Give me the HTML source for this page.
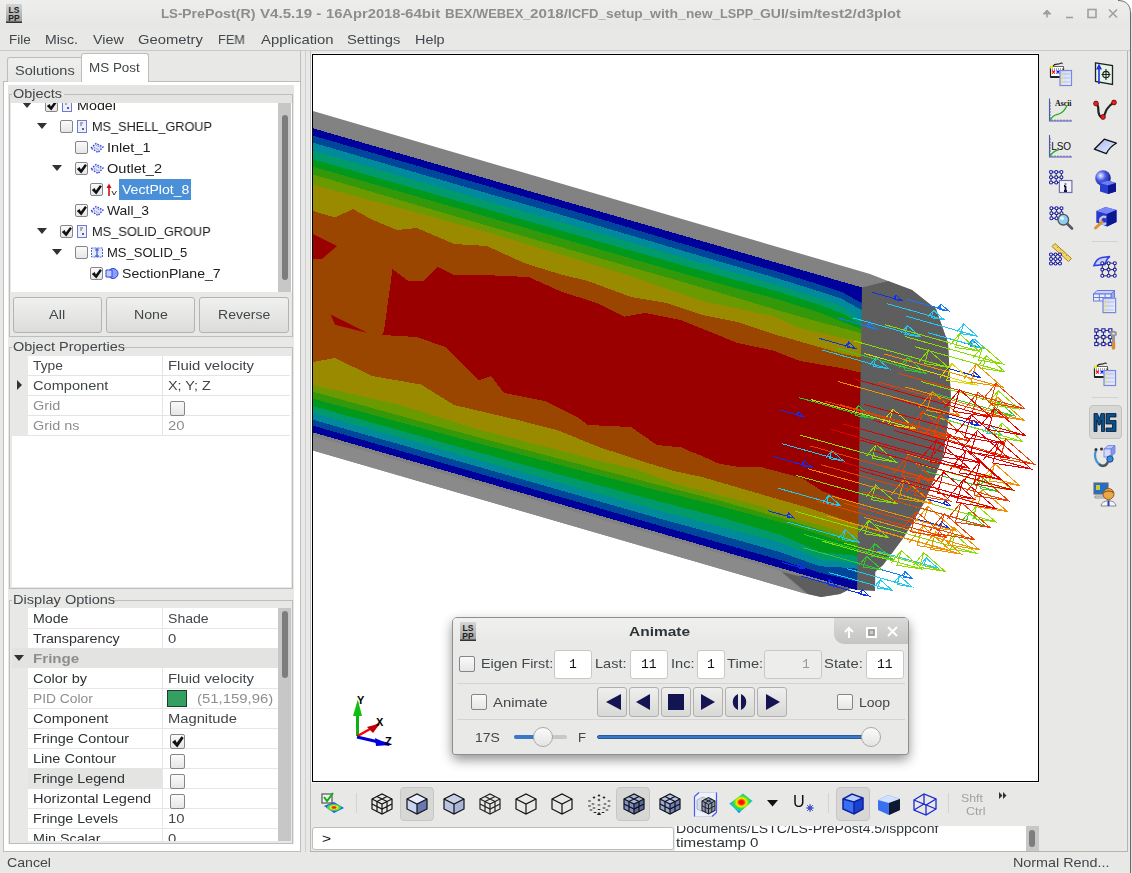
<!DOCTYPE html>
<html><head><meta charset="utf-8"><title>LS-PrePost</title>
<style>
html,body{margin:0;padding:0;width:1132px;height:873px;overflow:hidden;background:#e8e8e7;font-family:"Liberation Sans",sans-serif}
.r{position:absolute;box-sizing:border-box}
svg.r{overflow:visible}
.t{position:absolute;white-space:nowrap;transform-origin:0 0;will-change:transform}
</style></head><body>
<div class="r" style="left:0px;top:0px;width:1132px;height:27px;background:linear-gradient(#eeeeed,#e6e6e5)"></div>
<svg class="r" style="left:6px;top:4px" width="16" height="19" viewBox="0 0 16 19"><defs><linearGradient id="lg1" x1="0" y1="0" x2="0" y2="1"><stop offset="0" stop-color="#d6d6d6"/><stop offset="1" stop-color="#9c9c9c"/></linearGradient></defs><rect x="0" y="0" width="16" height="19" fill="url(#lg1)"/><rect x="0" y="17.5" width="16" height="1.5" fill="#333"/><text x="8" y="8.5" font-family="Liberation Sans" font-size="8.5" font-weight="bold" text-anchor="middle" fill="#222">LS</text><text x="8" y="16.5" font-family="Liberation Sans" font-size="8.5" font-weight="bold" text-anchor="middle" fill="#222">PP</text></svg>
<div class="t" style="left:161.0px;top:8px;font-size:12px;line-height:12px;color:#8d8d8d;font-weight:bold;font-family:'Liberation Sans';transform:scaleX(1.1077)">LS-</div>
<div class="t" style="left:182.41028911564626px;top:8px;font-size:12px;line-height:12px;color:#8d8d8d;font-weight:bold;font-family:'Liberation Sans';transform:scaleX(1.1849)">PrePost(R)</div>
<div class="t" style="left:260.09141156462584px;top:8px;font-size:12px;line-height:12px;color:#8d8d8d;font-weight:bold;font-family:'Liberation Sans';transform:scaleX(1.2605)">V4.5.19 -</div>
<div class="t" style="left:325.6437074829932px;top:8px;font-size:12px;line-height:12px;color:#8d8d8d;font-weight:bold;font-family:'Liberation Sans';transform:scaleX(1.2268)">16Apr2018-</div>
<div class="t" style="left:405.0238095238095px;top:8px;font-size:12px;line-height:12px;color:#8d8d8d;font-weight:bold;font-family:'Liberation Sans';transform:scaleX(1.2630)">64bit</div>
<div class="t" style="left:444.5880102040816px;top:8px;font-size:12px;line-height:12px;color:#8d8d8d;font-weight:bold;font-family:'Liberation Sans';transform:scaleX(1.1141)">BEX/</div>
<div class="t" style="left:475.78316326530614px;top:8px;font-size:12px;line-height:12px;color:#8d8d8d;font-weight:bold;font-family:'Liberation Sans';transform:scaleX(1.0736)">WEBEX_</div>
<div class="t" style="left:530.1819727891157px;top:8px;font-size:12px;line-height:12px;color:#8d8d8d;font-weight:bold;font-family:'Liberation Sans';transform:scaleX(1.2668)">2018/</div>
<div class="t" style="left:568.2045068027211px;top:8px;font-size:12px;line-height:12px;color:#8d8d8d;font-weight:bold;font-family:'Liberation Sans';transform:scaleX(1.0876)">ICFD_</div>
<div class="t" style="left:605.9124149659864px;top:8px;font-size:12px;line-height:12px;color:#8d8d8d;font-weight:bold;font-family:'Liberation Sans';transform:scaleX(1.1496)">setup_</div>
<div class="t" style="left:650.3690476190477px;top:8px;font-size:12px;line-height:12px;color:#8d8d8d;font-weight:bold;font-family:'Liberation Sans';transform:scaleX(1.1654)">with_</div>
<div class="t" style="left:686.0948129251701px;top:8px;font-size:12px;line-height:12px;color:#8d8d8d;font-weight:bold;font-family:'Liberation Sans';transform:scaleX(1.1337)">new_</div>
<div class="t" style="left:720.1058673469388px;top:8px;font-size:12px;line-height:12px;color:#8d8d8d;font-weight:bold;font-family:'Liberation Sans';transform:scaleX(1.0565)">LSPP_</div>
<div class="t" style="left:760.2521258503401px;top:8px;font-size:12px;line-height:12px;color:#8d8d8d;font-weight:bold;font-family:'Liberation Sans';transform:scaleX(1.1618)">GUI/</div>
<div class="t" style="left:788.8988095238095px;top:8px;font-size:12px;line-height:12px;color:#8d8d8d;font-weight:bold;font-family:'Liberation Sans';transform:scaleX(1.1805)">sim/</div>
<div class="t" style="left:817.2308673469388px;top:8px;font-size:12px;line-height:12px;color:#8d8d8d;font-weight:bold;font-family:'Liberation Sans';transform:scaleX(1.2683)">test2/</div>
<div class="t" style="left:856.9838435374149px;top:8px;font-size:12px;line-height:12px;color:#8d8d8d;font-weight:bold;font-family:'Liberation Sans';transform:scaleX(1.2206)">d3plot</div>
<svg class="r" style="left:1038px;top:5px" width="90" height="18" viewBox="0 0 90 18"><g stroke="#a0a0a0" stroke-width="1.6" fill="none"><path d="M9 12.5V7"/><path d="M5 9L9 5L13 9Z" fill="#a0a0a0" stroke-width="1"/><path d="M28 12.5h7"/><rect x="50" y="4.5" width="8" height="8"/><path d="M71 4.5l8 8M79 4.5l-8 8"/></g></svg>
<div class="r" style="left:0px;top:27px;width:1132px;height:23px;background:#e8e8e7"></div>
<div class="r" style="left:0px;top:50px;width:1132px;height:1px;background:#cacac9"></div>
<div class="t" style="left:9px;top:33px;font-size:13px;line-height:13px;color:#42474a;font-family:'Liberation Sans';transform:scaleX(1.0380)">File</div>
<div class="t" style="left:45px;top:33px;font-size:13px;line-height:13px;color:#42474a;font-family:'Liberation Sans';transform:scaleX(1.0835)">Misc.</div>
<div class="t" style="left:93px;top:33px;font-size:13px;line-height:13px;color:#42474a;font-family:'Liberation Sans';transform:scaleX(1.1034)">View</div>
<div class="t" style="left:138px;top:33px;font-size:13px;line-height:13px;color:#42474a;font-family:'Liberation Sans';transform:scaleX(1.1355)">Geometry</div>
<div class="t" style="left:218px;top:33px;font-size:13px;line-height:13px;color:#42474a;font-family:'Liberation Sans';transform:scaleX(0.9812)">FEM</div>
<div class="t" style="left:261px;top:33px;font-size:13px;line-height:13px;color:#42474a;font-family:'Liberation Sans';transform:scaleX(1.1412)">Application</div>
<div class="t" style="left:347px;top:33px;font-size:13px;line-height:13px;color:#42474a;font-family:'Liberation Sans';transform:scaleX(1.1344)">Settings</div>
<div class="t" style="left:415px;top:33px;font-size:13px;line-height:13px;color:#42474a;font-family:'Liberation Sans';transform:scaleX(1.1081)">Help</div>
<div class="r" style="left:0px;top:51px;width:1132px;height:822px;background:#e8e8e7"></div>
<div class="r" style="left:3px;top:81px;width:298px;height:771px;border:1px solid #bdbdbc;background:#ffffff;box-sizing:border-box"></div>
<div class="r" style="left:8px;top:85px;width:286px;height:759px;background:#e8e8e7"></div>
<div class="r" style="left:7px;top:57px;width:76px;height:25px;border:1px solid #bdbdbc;border-bottom:none;border-radius:3px 3px 0 0;background:linear-gradient(#efefee,#e6e6e5);box-sizing:border-box"></div>
<div class="r" style="left:81px;top:53px;width:68px;height:29px;border:1px solid #bdbdbc;border-bottom:none;border-radius:3px 3px 0 0;background:#ffffff;box-sizing:border-box"></div>
<div class="r" style="left:82px;top:81px;width:66px;height:1px;background:#ffffff"></div>
<div class="t" style="left:15px;top:64px;font-size:13px;line-height:13px;color:#42474a;font-family:'Liberation Sans';transform:scaleX(1.1159)">Solutions</div>
<div class="t" style="left:89px;top:61px;font-size:13px;line-height:13px;color:#42474a;font-family:'Liberation Sans';transform:scaleX(1.0337)">MS Post</div>
<div class="r" style="left:8px;top:85px;width:286px;height:18px;background:#e4e4e3"></div>
<div class="r" style="left:9px;top:94px;width:284px;height:243px;border:1px solid #bdbdbc;box-sizing:border-box"></div>
<div class="r" style="left:12px;top:89px;width:52px;height:8px;background:#e4e4e3"></div>
<div class="r" style="left:12px;top:94px;width:52px;height:2px;background:#e8e8e7"></div>
<div class="t" style="left:13px;top:87px;font-size:13px;line-height:13px;color:#42474a;font-family:'Liberation Sans';transform:scaleX(1.1138)">Objects</div>
<div class="r" style="left:11px;top:103px;width:281px;height:189px;background:#ffffff"></div>
<div class="r" style="left:278px;top:103px;width:13px;height:189px;background:#c6c7c6"></div>
<div class="r" style="left:282px;top:115px;width:6px;height:165px;background:#7c7d7c;border-radius:3px"></div>
<div class="r" style="left:11px;top:103px;width:267px;height:189px;overflow:hidden">
<svg class="r" style="left:11px;top:-1px" width="10" height="6" viewBox="0 0 10 6"><path d="M0 0H10L5.0 6Z" fill="#2e3436"/></svg>
<div class="r" style="left:34px;top:-4px;width:13px;height:13px;border:1px solid #85858a;border-radius:2px;background:linear-gradient(#fafafa,#e6e6e6);box-sizing:border-box"></div>
<svg class="r" style="left:34px;top:-4px" width="13" height="13" viewBox="0 0 13 13"><polygon points="1.80,6.90 4.60,5.00 5.90,7.50 10.00,2.00 11.90,3.50 6.30,11.60" fill="#111"/></svg>
<svg class="r" style="left:51px;top:-4px" width="10" height="13" viewBox="0 0 10 13"><rect x="0.5" y="0.5" width="9" height="12" fill="#eef" stroke="#6b7bd6"/><path d="M3 3h3M3 5h2M5 8l2 2M7 8l-2 2" stroke="#555" stroke-width="0.9"/></svg>
<div class="t" style="left:66px;top:-4px;font-size:13px;line-height:13px;color:#202020;font-family:'Liberation Sans';transform:scaleX(1.1019)">Model</div>
<svg class="r" style="left:26px;top:20px" width="10" height="6" viewBox="0 0 10 6"><path d="M0 0H10L5.0 6Z" fill="#2e3436"/></svg>
<div class="r" style="left:49px;top:17px;width:13px;height:13px;border:1px solid #85858a;border-radius:2px;background:linear-gradient(#fafafa,#e6e6e6);box-sizing:border-box"></div>
<svg class="r" style="left:66px;top:17px" width="10" height="13" viewBox="0 0 10 13"><rect x="0.5" y="0.5" width="9" height="12" fill="#eef" stroke="#6b7bd6"/><path d="M3 3h3M3 5h2M5 8l2 2M7 8l-2 2" stroke="#555" stroke-width="0.9"/></svg>
<div class="t" style="left:81px;top:17px;font-size:13px;line-height:13px;color:#202020;font-family:'Liberation Sans';transform:scaleX(0.9762)">MS_SHELL_GROUP</div>
<div class="r" style="left:64px;top:38px;width:13px;height:13px;border:1px solid #85858a;border-radius:2px;background:linear-gradient(#fafafa,#e6e6e6);box-sizing:border-box"></div>
<svg class="r" style="left:79px;top:39px" width="14" height="12" viewBox="0 0 14 12"><path d="M1 6L6 1.5L13 5L8 10.5Z" fill="#e4e6f0" stroke="#3a4ae8" stroke-width="1.4" stroke-dasharray="1.6 1.2"/><path d="M4 5.5l5 2.5M6.5 3.5l4 2" stroke="#6070e0" stroke-width="1" stroke-dasharray="1 1"/></svg>
<div class="t" style="left:96px;top:38px;font-size:13px;line-height:13px;color:#202020;font-family:'Liberation Sans';transform:scaleX(1.1148)">Inlet_1</div>
<svg class="r" style="left:41px;top:62px" width="10" height="6" viewBox="0 0 10 6"><path d="M0 0H10L5.0 6Z" fill="#2e3436"/></svg>
<div class="r" style="left:64px;top:59px;width:13px;height:13px;border:1px solid #85858a;border-radius:2px;background:linear-gradient(#fafafa,#e6e6e6);box-sizing:border-box"></div>
<svg class="r" style="left:64px;top:59px" width="13" height="13" viewBox="0 0 13 13"><polygon points="1.80,6.90 4.60,5.00 5.90,7.50 10.00,2.00 11.90,3.50 6.30,11.60" fill="#111"/></svg>
<svg class="r" style="left:79px;top:60px" width="14" height="12" viewBox="0 0 14 12"><path d="M1 6L6 1.5L13 5L8 10.5Z" fill="#e4e6f0" stroke="#3a4ae8" stroke-width="1.4" stroke-dasharray="1.6 1.2"/><path d="M4 5.5l5 2.5M6.5 3.5l4 2" stroke="#6070e0" stroke-width="1" stroke-dasharray="1 1"/></svg>
<div class="t" style="left:96px;top:59px;font-size:13px;line-height:13px;color:#202020;font-family:'Liberation Sans';transform:scaleX(1.1195)">Outlet_2</div>
<div class="r" style="left:79px;top:80px;width:13px;height:13px;border:1px solid #85858a;border-radius:2px;background:linear-gradient(#fafafa,#e6e6e6);box-sizing:border-box"></div>
<svg class="r" style="left:79px;top:80px" width="13" height="13" viewBox="0 0 13 13"><polygon points="1.80,6.90 4.60,5.00 5.90,7.50 10.00,2.00 11.90,3.50 6.30,11.60" fill="#111"/></svg>
<svg class="r" style="left:95px;top:80px" width="12" height="14" viewBox="0 0 12 14"><path d="M3 13V3" stroke="#d01010" stroke-width="1.6"/><path d="M0.5 5L3 0.5L5.5 5Z" fill="#d01010"/><path d="M6 8l2 4l2.5-4" stroke="#333" stroke-width="1" fill="none"/></svg>
<div class="r" style="left:108px;top:76px;width:72px;height:21px;background:#4a90d9"></div>
<div class="t" style="left:111px;top:80px;font-size:13px;line-height:13px;color:#ffffff;font-family:'Liberation Sans';transform:scaleX(1.0837)">VectPlot_8</div>
<div class="r" style="left:64px;top:101px;width:13px;height:13px;border:1px solid #85858a;border-radius:2px;background:linear-gradient(#fafafa,#e6e6e6);box-sizing:border-box"></div>
<svg class="r" style="left:64px;top:101px" width="13" height="13" viewBox="0 0 13 13"><polygon points="1.80,6.90 4.60,5.00 5.90,7.50 10.00,2.00 11.90,3.50 6.30,11.60" fill="#111"/></svg>
<svg class="r" style="left:79px;top:102px" width="14" height="12" viewBox="0 0 14 12"><path d="M1 6L6 1.5L13 5L8 10.5Z" fill="#e4e6f0" stroke="#3a4ae8" stroke-width="1.4" stroke-dasharray="1.6 1.2"/><path d="M4 5.5l5 2.5M6.5 3.5l4 2" stroke="#6070e0" stroke-width="1" stroke-dasharray="1 1"/></svg>
<div class="t" style="left:96px;top:101px;font-size:13px;line-height:13px;color:#202020;font-family:'Liberation Sans';transform:scaleX(1.0692)">Wall_3</div>
<svg class="r" style="left:26px;top:125px" width="10" height="6" viewBox="0 0 10 6"><path d="M0 0H10L5.0 6Z" fill="#2e3436"/></svg>
<div class="r" style="left:49px;top:122px;width:13px;height:13px;border:1px solid #85858a;border-radius:2px;background:linear-gradient(#fafafa,#e6e6e6);box-sizing:border-box"></div>
<svg class="r" style="left:49px;top:122px" width="13" height="13" viewBox="0 0 13 13"><polygon points="1.80,6.90 4.60,5.00 5.90,7.50 10.00,2.00 11.90,3.50 6.30,11.60" fill="#111"/></svg>
<svg class="r" style="left:66px;top:122px" width="10" height="13" viewBox="0 0 10 13"><rect x="0.5" y="0.5" width="9" height="12" fill="#eef" stroke="#6b7bd6"/><path d="M3 3h3M3 5h2M5 8l2 2M7 8l-2 2" stroke="#555" stroke-width="0.9"/></svg>
<div class="t" style="left:81px;top:122px;font-size:13px;line-height:13px;color:#202020;font-family:'Liberation Sans';transform:scaleX(0.9842)">MS_SOLID_GROUP</div>
<svg class="r" style="left:41px;top:146px" width="10" height="6" viewBox="0 0 10 6"><path d="M0 0H10L5.0 6Z" fill="#2e3436"/></svg>
<div class="r" style="left:64px;top:143px;width:13px;height:13px;border:1px solid #85858a;border-radius:2px;background:linear-gradient(#fafafa,#e6e6e6);box-sizing:border-box"></div>
<svg class="r" style="left:79px;top:143px" width="14" height="13" viewBox="0 0 14 13"><rect x="1.5" y="2" width="11" height="9" fill="#e4ebff" stroke="#4b63d8" stroke-dasharray="2 1"/><path d="M7 2V11M5 4H9M5 10H9" stroke="#3a50c8" stroke-width="1.2"/></svg>
<div class="t" style="left:96px;top:143px;font-size:13px;line-height:13px;color:#202020;font-family:'Liberation Sans';transform:scaleX(1.0012)">MS_SOLID_5</div>
<div class="r" style="left:79px;top:164px;width:13px;height:13px;border:1px solid #85858a;border-radius:2px;background:linear-gradient(#fafafa,#e6e6e6);box-sizing:border-box"></div>
<svg class="r" style="left:79px;top:164px" width="13" height="13" viewBox="0 0 13 13"><polygon points="1.80,6.90 4.60,5.00 5.90,7.50 10.00,2.00 11.90,3.50 6.30,11.60" fill="#111"/></svg>
<svg class="r" style="left:94px;top:164px" width="14" height="13" viewBox="0 0 14 13"><ellipse cx="8" cy="6.5" rx="5" ry="5" fill="#8aa0ff" stroke="#2840d0"/><path d="M1 3h6v7H1z" fill="#c0ccff" stroke="#3048d8"/></svg>
<div class="t" style="left:111px;top:164px;font-size:13px;line-height:13px;color:#202020;font-family:'Liberation Sans';transform:scaleX(1.0833)">SectionPlane_7</div>
</div>
<div class="r" style="left:13px;top:297px;width:89px;height:36px;border:1px solid #b4b4b3;border-radius:3px;background:linear-gradient(#f0f0ef,#dcdcdb);box-sizing:border-box"></div>
<div class="t" style="left:49.4453125px;top:308px;font-size:13px;line-height:13px;color:#42474a;font-family:'Liberation Sans';transform:scaleX(1.1146)">All</div>
<div class="r" style="left:106px;top:297px;width:89px;height:36px;border:1px solid #b4b4b3;border-radius:3px;background:linear-gradient(#f0f0ef,#dcdcdb);box-sizing:border-box"></div>
<div class="t" style="left:133.546875px;top:308px;font-size:13px;line-height:13px;color:#42474a;font-family:'Liberation Sans';transform:scaleX(1.0905)">None</div>
<div class="r" style="left:199px;top:297px;width:90px;height:36px;border:1px solid #b4b4b3;border-radius:3px;background:linear-gradient(#f0f0ef,#dcdcdb);box-sizing:border-box"></div>
<div class="t" style="left:217.875px;top:308px;font-size:13px;line-height:13px;color:#42474a;font-family:'Liberation Sans';transform:scaleX(1.0791)">Reverse</div>
<div class="r" style="left:9px;top:347px;width:284px;height:242px;border:1px solid #bdbdbc;box-sizing:border-box"></div>
<div class="r" style="left:12px;top:342px;width:110px;height:8px;background:#e8e8e7"></div>
<div class="t" style="left:13px;top:340px;font-size:13px;line-height:13px;color:#42474a;font-family:'Liberation Sans';transform:scaleX(1.1163)">Object Properties</div>
<div class="r" style="left:12px;top:356px;width:279px;height:231px;background:#ffffff"></div>
<div class="r" style="left:12px;top:356px;width:16px;height:80px;background:#e8e8e7"></div>
<div class="r" style="left:28px;top:375px;width:262px;height:1px;background:#e4e4e4"></div>
<div class="r" style="left:28px;top:395px;width:262px;height:1px;background:#e4e4e4"></div>
<div class="r" style="left:28px;top:415px;width:262px;height:1px;background:#e4e4e4"></div>
<div class="r" style="left:28px;top:435px;width:262px;height:1px;background:#e4e4e4"></div>
<div class="r" style="left:162px;top:356px;width:1px;height:80px;background:#e4e4e4"></div>
<svg class="r" style="left:17px;top:380px" width="5" height="10" viewBox="0 0 5 10"><path d="M0 0V10L5 5.0Z" fill="#2e3436"/></svg>
<div class="t" style="left:33px;top:359px;font-size:13px;line-height:13px;color:#42474a;font-family:'Liberation Sans';transform:scaleX(1.0588)">Type</div>
<div class="t" style="left:168px;top:359px;font-size:13px;line-height:13px;color:#42474a;font-family:'Liberation Sans';transform:scaleX(1.1455)">Fluid velocity</div>
<div class="t" style="left:33px;top:379px;font-size:13px;line-height:13px;color:#42474a;font-family:'Liberation Sans';transform:scaleX(1.1222)">Component</div>
<div class="t" style="left:168px;top:379px;font-size:13px;line-height:13px;color:#42474a;font-family:'Liberation Sans';transform:scaleX(1.1063)">X; Y; Z</div>
<div class="t" style="left:33px;top:399px;font-size:13px;line-height:13px;color:#8e8e8d;font-family:'Liberation Sans';transform:scaleX(1.1107)">Grid</div>
<div class="r" style="left:170px;top:401px;width:15px;height:15px;border:1px solid #85858a;border-radius:2px;background:linear-gradient(#fafafa,#e6e6e6);box-sizing:border-box"></div>
<div class="t" style="left:33px;top:419px;font-size:13px;line-height:13px;color:#8e8e8d;font-family:'Liberation Sans';transform:scaleX(1.1074)">Grid ns</div>
<div class="t" style="left:168px;top:419px;font-size:13px;line-height:13px;color:#8e8e8d;font-family:'Liberation Sans';transform:scaleX(1.1425)">20</div>
<div class="r" style="left:9px;top:600px;width:284px;height:244px;border:1px solid #bdbdbc;box-sizing:border-box"></div>
<div class="r" style="left:12px;top:595px;width:98px;height:8px;background:#e8e8e7"></div>
<div class="t" style="left:13px;top:593px;font-size:13px;line-height:13px;color:#42474a;font-family:'Liberation Sans';transform:scaleX(1.1220)">Display Options</div>
<div class="r" style="left:12px;top:608px;width:279px;height:233px;background:#ffffff;overflow:hidden"></div>
<div class="r" style="left:12px;top:608px;width:16px;height:233px;background:#e8e8e7"></div>
<div class="r" style="left:278px;top:608px;width:13px;height:233px;background:#c6c7c6"></div>
<div class="r" style="left:282px;top:611px;width:6px;height:67px;background:#7c7d7c;border-radius:3px"></div>
<div class="r" style="left:12px;top:608px;width:266px;height:233px;overflow:hidden">
<div class="r" style="left:16px;top:20px;width:250px;height:1px;background:#e6e6e6"></div>
<div class="r" style="left:150px;top:0px;width:1px;height:20px;background:#e6e6e6"></div>
<div class="t" style="left:21px;top:4px;font-size:13px;line-height:13px;color:#2e3436;font-family:'Liberation Sans';transform:scaleX(1.0889)">Mode</div>
<div class="t" style="left:156px;top:4px;font-size:13px;line-height:13px;color:#42474a;font-family:'Liberation Sans';transform:scaleX(1.0823)">Shade</div>
<div class="r" style="left:16px;top:40px;width:250px;height:1px;background:#e6e6e6"></div>
<div class="r" style="left:150px;top:20px;width:1px;height:20px;background:#e6e6e6"></div>
<div class="t" style="left:21px;top:24px;font-size:13px;line-height:13px;color:#2e3436;font-family:'Liberation Sans';transform:scaleX(1.0971)">Transparency</div>
<div class="t" style="left:156px;top:24px;font-size:13px;line-height:13px;color:#42474a;font-family:'Liberation Sans';transform:scaleX(1.1425)">0</div>
<div class="r" style="left:0px;top:40px;width:266px;height:20px;background:#e3e3e2"></div>
<svg class="r" style="left:2px;top:47px" width="10" height="6" viewBox="0 0 10 6"><path d="M0 0H10L5.0 6Z" fill="#2e3436"/></svg>
<div class="t" style="left:21px;top:44px;font-size:13px;line-height:13px;color:#8e8e8d;font-weight:bold;font-family:'Liberation Sans';transform:scaleX(1.1652)">Fringe</div>
<div class="r" style="left:16px;top:80px;width:250px;height:1px;background:#e6e6e6"></div>
<div class="r" style="left:150px;top:60px;width:1px;height:20px;background:#e6e6e6"></div>
<div class="t" style="left:21px;top:64px;font-size:13px;line-height:13px;color:#2e3436;font-family:'Liberation Sans';transform:scaleX(1.1152)">Color by</div>
<div class="t" style="left:156px;top:64px;font-size:13px;line-height:13px;color:#42474a;font-family:'Liberation Sans';transform:scaleX(1.1455)">Fluid velocity</div>
<div class="r" style="left:16px;top:100px;width:250px;height:1px;background:#e6e6e6"></div>
<div class="r" style="left:150px;top:80px;width:1px;height:20px;background:#e6e6e6"></div>
<div class="t" style="left:21px;top:84px;font-size:13px;line-height:13px;color:#8e8e8d;font-family:'Liberation Sans';transform:scaleX(1.0602)">PID Color</div>
<div class="r" style="left:155px;top:82px;width:20px;height:17px;background:#339f60;border:1px solid #1e3d2a;box-sizing:border-box"></div>
<div class="t" style="left:185px;top:84px;font-size:13px;line-height:13px;color:#8e8e8d;font-family:'Liberation Sans';transform:scaleX(1.1466)">(51,159,96)</div>
<div class="r" style="left:16px;top:120px;width:250px;height:1px;background:#e6e6e6"></div>
<div class="r" style="left:150px;top:100px;width:1px;height:20px;background:#e6e6e6"></div>
<div class="t" style="left:21px;top:104px;font-size:13px;line-height:13px;color:#2e3436;font-family:'Liberation Sans';transform:scaleX(1.1222)">Component</div>
<div class="t" style="left:156px;top:104px;font-size:13px;line-height:13px;color:#42474a;font-family:'Liberation Sans';transform:scaleX(1.1338)">Magnitude</div>
<div class="r" style="left:16px;top:140px;width:250px;height:1px;background:#e6e6e6"></div>
<div class="r" style="left:150px;top:120px;width:1px;height:20px;background:#e6e6e6"></div>
<div class="t" style="left:21px;top:124px;font-size:13px;line-height:13px;color:#2e3436;font-family:'Liberation Sans';transform:scaleX(1.1066)">Fringe Contour</div>
<div class="r" style="left:158px;top:126px;width:15px;height:15px;border:1px solid #85858a;border-radius:2px;background:linear-gradient(#fafafa,#e6e6e6);box-sizing:border-box"></div>
<svg class="r" style="left:158px;top:126px" width="15" height="15" viewBox="0 0 15 15"><polygon points="2.08,7.96 5.31,5.77 6.81,8.65 11.54,2.31 13.73,4.04 7.27,13.38" fill="#111"/></svg>
<div class="r" style="left:16px;top:160px;width:250px;height:1px;background:#e6e6e6"></div>
<div class="r" style="left:150px;top:140px;width:1px;height:20px;background:#e6e6e6"></div>
<div class="t" style="left:21px;top:144px;font-size:13px;line-height:13px;color:#2e3436;font-family:'Liberation Sans';transform:scaleX(1.1160)">Line Contour</div>
<div class="r" style="left:158px;top:146px;width:15px;height:15px;border:1px solid #85858a;border-radius:2px;background:linear-gradient(#fafafa,#e6e6e6);box-sizing:border-box"></div>
<div class="r" style="left:16px;top:160px;width:134px;height:20px;background:#e4e4e3"></div>
<div class="r" style="left:16px;top:180px;width:250px;height:1px;background:#e6e6e6"></div>
<div class="r" style="left:150px;top:160px;width:1px;height:20px;background:#e6e6e6"></div>
<div class="t" style="left:21px;top:164px;font-size:13px;line-height:13px;color:#2e3436;font-family:'Liberation Sans';transform:scaleX(1.0950)">Fringe Legend</div>
<div class="r" style="left:158px;top:166px;width:15px;height:15px;border:1px solid #85858a;border-radius:2px;background:linear-gradient(#fafafa,#e6e6e6);box-sizing:border-box"></div>
<div class="r" style="left:16px;top:200px;width:250px;height:1px;background:#e6e6e6"></div>
<div class="r" style="left:150px;top:180px;width:1px;height:20px;background:#e6e6e6"></div>
<div class="t" style="left:21px;top:184px;font-size:13px;line-height:13px;color:#2e3436;font-family:'Liberation Sans';transform:scaleX(1.1202)">Horizontal Legend</div>
<div class="r" style="left:158px;top:186px;width:15px;height:15px;border:1px solid #85858a;border-radius:2px;background:linear-gradient(#fafafa,#e6e6e6);box-sizing:border-box"></div>
<div class="r" style="left:16px;top:220px;width:250px;height:1px;background:#e6e6e6"></div>
<div class="r" style="left:150px;top:200px;width:1px;height:20px;background:#e6e6e6"></div>
<div class="t" style="left:21px;top:204px;font-size:13px;line-height:13px;color:#2e3436;font-family:'Liberation Sans';transform:scaleX(1.0911)">Fringe Levels</div>
<div class="t" style="left:156px;top:204px;font-size:13px;line-height:13px;color:#42474a;font-family:'Liberation Sans';transform:scaleX(1.1425)">10</div>
<div class="r" style="left:16px;top:240px;width:250px;height:1px;background:#e6e6e6"></div>
<div class="r" style="left:150px;top:220px;width:1px;height:20px;background:#e6e6e6"></div>
<div class="t" style="left:21px;top:224px;font-size:13px;line-height:13px;color:#2e3436;font-family:'Liberation Sans';transform:scaleX(1.0984)">Min Scalar</div>
<div class="t" style="left:156px;top:224px;font-size:13px;line-height:13px;color:#42474a;font-family:'Liberation Sans';transform:scaleX(1.1425)">0</div>
</div>
<div class="t" style="left:7px;top:856px;font-size:13px;line-height:13px;color:#42474a;font-family:'Liberation Sans';transform:scaleX(1.0876)">Cancel</div>
<div class="r" style="left:300px;top:51px;width:1px;height:801px;background:#bdbdbc"></div>
<div class="r" style="left:305px;top:51px;width:1px;height:801px;background:#d0d0cf"></div>
<div class="r" style="left:310px;top:51px;width:1px;height:801px;background:#bdbdbc"></div>
<div class="r" style="left:312px;top:54px;width:727px;height:728px;background:#ffffff;border:1.5px solid #000;box-sizing:border-box;box-shadow:0 0 0 1px #f8f8f8"></div>
<svg class="r" style="left:313px;top:55px" width="725" height="726" viewBox="0 0 725 726"><g transform="translate(-313,-55)"><polygon points="313.0,111.0 870.0,274.0 888.0,281.0 912.0,290.0 936.0,309.0 948.0,343.0 951.0,400.0 943.0,457.0 924.0,503.0 904.0,537.0 883.0,565.0 862.0,583.0 840.0,594.0 821.0,597.0 805.0,593.4 313.0,450.5" fill="#828282"/><polygon points="313.0,436.0 780.0,571.0 805.0,593.4 313.0,450.5" fill="#8a8a8a"/><polygon points="863.0,288.0 888.0,281.0 912.0,290.0 936.0,309.0 948.0,343.0 951.0,400.0 943.0,457.0 924.0,503.0 904.0,537.0 883.0,565.0 862.0,583.0 840.0,594.0 821.0,597.0 808.0,594.0 782.0,572.0 857.0,590.0" fill="#5e5e5e"/><polygon points="313.0,128.3 862.0,287.5 858.0,590.5 313.0,432.4" fill="#00009b" shape-rendering="crispEdges"/><polygon points="313.0,135.7 360.0,149.3 420.0,166.6 480.0,183.9 540.0,201.2 600.0,218.9 660.0,237.0 720.0,254.9 780.0,272.4 820.0,284.8 842.0,292.0 862.0,303.3 862.0,582.8 842.0,578.0 820.0,572.8 780.0,560.0 720.0,542.9 660.0,525.8 600.0,508.4 540.0,491.1 480.0,473.8 420.0,456.5 360.0,439.2 313.0,425.6" fill="#00479b" shape-rendering="crispEdges"/><polygon points="313.0,142.7 360.0,156.4 420.0,173.8 480.0,191.2 540.0,208.6 600.0,226.3 660.0,244.0 720.0,261.7 780.0,279.1 820.0,291.6 842.0,299.0 862.0,310.2 862.0,569.1 842.0,567.5 820.0,566.3 780.0,552.1 720.0,535.1 660.0,518.7 600.0,501.6 540.0,484.5 480.0,467.3 420.0,450.2 360.0,433.1 313.0,419.7" fill="#008a9b" shape-rendering="crispEdges"/><polygon points="313.0,150.7 360.0,164.3 420.0,181.6 480.0,198.9 540.0,216.2 600.0,233.6 660.0,251.1 720.0,268.5 780.0,285.8 820.0,298.6 842.0,306.4 862.0,322.2 862.0,563.6 842.0,561.8 820.0,559.9 780.0,542.5 720.0,526.7 660.0,510.9 600.0,494.1 540.0,477.2 480.0,460.3 420.0,443.2 360.0,426.1 313.0,412.7" fill="#009a6b" shape-rendering="crispEdges"/><polygon points="313.0,159.3 360.0,172.8 420.0,190.1 480.0,207.3 540.0,224.6 600.0,241.8 660.0,258.9 720.0,275.8 780.0,292.1 820.0,305.1 842.0,313.4 862.0,324.6 862.0,556.6 842.0,554.4 820.0,552.0 780.0,534.6 720.0,517.3 660.0,501.7 600.0,485.6 540.0,469.2 480.0,452.8 420.0,436.1 360.0,419.3 313.0,406.1" fill="#00991c" shape-rendering="crispEdges"/><polygon points="313.0,166.7 360.0,180.2 420.0,197.5 480.0,214.8 540.0,232.1 600.0,249.5 660.0,266.9 720.0,283.9 780.0,299.8 820.0,312.9 842.0,321.6 862.0,329.6 862.0,548.6 842.0,541.9 820.0,534.5 780.0,522.1 720.0,506.1 660.0,491.0 600.0,475.6 540.0,459.7 480.0,443.8 420.0,427.6 360.0,411.4 313.0,398.7" fill="#33990a" shape-rendering="crispEdges"/><polygon points="313.0,174.7 360.0,188.4 420.0,206.0 480.0,223.5 540.0,241.0 600.0,258.3 660.0,275.4 720.0,292.8 780.0,310.9 820.0,322.2 842.0,327.9 862.0,333.6 862.0,544.6 842.0,537.6 820.0,529.7 780.0,517.7 720.0,500.7 660.0,485.3 600.0,469.6 540.0,453.7 480.0,437.8 420.0,421.3 360.0,404.7 313.0,391.7" fill="#6a9a00" shape-rendering="crispEdges"/><polygon points="313.0,184.8 400.0,208.0 480.0,230.0 562.0,254.9 631.0,276.0 702.0,301.0 773.0,316.0 800.0,328.0 842.0,338.0 863.0,341.7 863.0,540.0 822.0,525.4 802.0,520.5 762.0,506.5 702.0,490.6 674.0,483.3 637.0,469.7 600.0,461.0 480.0,430.0 400.0,405.0 313.0,385.2" fill="#9a8a00" shape-rendering="crispEdges"/><polygon points="313.0,211.0 335.0,217.5 353.0,209.0 372.0,219.6 397.0,230.0 417.0,228.0 454.0,244.0 487.0,246.0 524.0,263.0 562.0,274.8 588.0,281.0 631.0,297.0 666.5,303.0 702.0,314.8 737.6,322.0 773.0,334.0 800.0,341.5 842.0,353.7 863.0,358.0 863.0,527.0 822.0,512.3 802.0,506.0 762.0,494.5 702.0,477.0 674.0,471.0 644.5,462.0 600.0,447.4 557.0,430.0 516.0,419.6 454.0,405.0 421.0,384.5 372.0,376.0 335.0,358.0 313.0,362.0" fill="#9a4600" shape-rendering="crispEdges"/><polygon points="392.5,269.0 409.0,281.4 423.0,281.0 438.0,267.0 454.0,275.0 483.0,275.0 528.6,277.0 562.0,292.0 595.5,302.5 624.0,316.7 645.0,313.0 680.7,320.0 702.0,328.6 737.6,343.0 773.0,350.5 800.0,361.0 842.0,368.2 863.0,373.0 863.0,505.0 857.0,504.0 822.0,491.0 802.0,478.0 762.0,467.3 738.5,467.0 718.7,463.5 702.0,456.0 686.6,450.0 681.6,447.4 657.0,445.0 631.0,427.0 588.0,425.0 578.0,417.5 545.0,401.0 504.0,393.0 491.0,376.0 479.0,380.0 446.0,347.4 417.0,337.0 382.0,335.0 384.0,331.0" fill="#9a0000" shape-rendering="crispEdges"/><polygon points="313.0,234.0 337.0,246.0 322.0,259.0 313.0,259.0" fill="#9a0000"/><polygon points="330.6,314.4 367.7,333.0 335.0,324.7" fill="#9a0000"/><polygon points="862.0,287.5 880.0,283.0 875.0,591.0 857.0,590.0" fill="#5e5e5e"/><line x1="782.3" y1="562.5" x2="804.6" y2="568.8" stroke="#1030e8" stroke-width="1" shape-rendering="crispEdges"/><polygon points="804.6,568.8 799.3,564.0 798.2,567.8" fill="none" stroke="#1030e8" stroke-width="1" shape-rendering="crispEdges"/><polyline points="796.7,567.2 799.3,564.0" fill="none" stroke="#1030e8" stroke-width="1" shape-rendering="crispEdges"/><line x1="926.6" y1="498.9" x2="950.8" y2="505.7" stroke="#1030e8" stroke-width="1" shape-rendering="crispEdges"/><polygon points="950.8,505.7 945.3,500.8 944.2,504.7" fill="none" stroke="#1030e8" stroke-width="1" shape-rendering="crispEdges"/><polyline points="942.7,504.1 945.3,500.8" fill="none" stroke="#1030e8" stroke-width="1" shape-rendering="crispEdges"/><line x1="779.7" y1="409.9" x2="804.0" y2="416.7" stroke="#1030e8" stroke-width="1" shape-rendering="crispEdges"/><polygon points="804.0,416.7 798.5,411.7 797.4,415.7" fill="none" stroke="#1030e8" stroke-width="1" shape-rendering="crispEdges"/><polyline points="795.9,415.1 798.5,411.7" fill="none" stroke="#1030e8" stroke-width="1" shape-rendering="crispEdges"/><line x1="768.3" y1="510.9" x2="794.2" y2="518.1" stroke="#1030e8" stroke-width="1" shape-rendering="crispEdges"/><polygon points="794.2,518.1 788.6,513.0 787.4,517.1" fill="none" stroke="#1030e8" stroke-width="1" shape-rendering="crispEdges"/><polyline points="785.8,516.5 788.6,513.0" fill="none" stroke="#1030e8" stroke-width="1" shape-rendering="crispEdges"/><line x1="871.9" y1="292.2" x2="902.3" y2="300.8" stroke="#1030e8" stroke-width="1" shape-rendering="crispEdges"/><polygon points="902.3,300.8 896.1,295.2 894.8,299.6" fill="none" stroke="#1030e8" stroke-width="1" shape-rendering="crispEdges"/><polyline points="893.1,298.9 896.1,295.2" fill="none" stroke="#1030e8" stroke-width="1" shape-rendering="crispEdges"/><line x1="948.1" y1="368.4" x2="980.5" y2="377.5" stroke="#1030e8" stroke-width="1" shape-rendering="crispEdges"/><polygon points="980.5,377.5 974.0,371.7 972.7,376.3" fill="none" stroke="#1030e8" stroke-width="1" shape-rendering="crispEdges"/><polyline points="970.9,375.6 974.0,371.7" fill="none" stroke="#1030e8" stroke-width="1" shape-rendering="crispEdges"/><line x1="947.1" y1="416.6" x2="979.6" y2="425.8" stroke="#1030e8" stroke-width="1" shape-rendering="crispEdges"/><polygon points="979.6,425.8 973.2,419.9 971.9,424.6" fill="none" stroke="#1030e8" stroke-width="1" shape-rendering="crispEdges"/><polyline points="970.0,423.9 973.2,419.9" fill="none" stroke="#1030e8" stroke-width="1" shape-rendering="crispEdges"/><line x1="913.5" y1="518.2" x2="948.6" y2="528.0" stroke="#1030e8" stroke-width="1" shape-rendering="crispEdges"/><polygon points="948.6,528.0 941.7,521.9 940.3,526.8" fill="none" stroke="#1030e8" stroke-width="1" shape-rendering="crispEdges"/><polyline points="938.4,526.0 941.7,521.9" fill="none" stroke="#1030e8" stroke-width="1" shape-rendering="crispEdges"/><line x1="800.9" y1="576.1" x2="836.4" y2="586.0" stroke="#1030e8" stroke-width="1" shape-rendering="crispEdges"/><polygon points="836.4,586.0 829.5,579.9 828.1,584.8" fill="none" stroke="#1030e8" stroke-width="1" shape-rendering="crispEdges"/><polyline points="826.2,584.0 829.5,579.9" fill="none" stroke="#1030e8" stroke-width="1" shape-rendering="crispEdges"/><line x1="818.6" y1="338.2" x2="855.9" y2="348.6" stroke="#1030e8" stroke-width="1" shape-rendering="crispEdges"/><polygon points="855.9,348.6 848.8,342.2 847.3,347.3" fill="none" stroke="#1030e8" stroke-width="1" shape-rendering="crispEdges"/><polyline points="845.2,346.5 848.8,342.2" fill="none" stroke="#1030e8" stroke-width="1" shape-rendering="crispEdges"/><line x1="832.0" y1="585.6" x2="869.3" y2="596.0" stroke="#1030e8" stroke-width="1" shape-rendering="crispEdges"/><polygon points="869.3,596.0 862.2,589.6 860.7,594.7" fill="none" stroke="#1030e8" stroke-width="1" shape-rendering="crispEdges"/><polyline points="858.7,593.9 862.2,589.6" fill="none" stroke="#1030e8" stroke-width="1" shape-rendering="crispEdges"/><line x1="773.3" y1="456.5" x2="811.8" y2="467.3" stroke="#1030e8" stroke-width="1" shape-rendering="crispEdges"/><polygon points="811.8,467.3 804.5,460.8 802.9,466.0" fill="none" stroke="#1030e8" stroke-width="1" shape-rendering="crispEdges"/><polyline points="800.9,465.2 804.5,460.8" fill="none" stroke="#1030e8" stroke-width="1" shape-rendering="crispEdges"/><line x1="837.6" y1="317.9" x2="877.3" y2="329.0" stroke="#1878f0" stroke-width="1" shape-rendering="crispEdges"/><polygon points="877.3,329.0 869.7,322.3 868.2,327.6" fill="none" stroke="#1878f0" stroke-width="1" shape-rendering="crispEdges"/><polyline points="866.0,326.8 869.7,322.3" fill="none" stroke="#1878f0" stroke-width="1" shape-rendering="crispEdges"/><line x1="872.2" y1="567.1" x2="912.6" y2="578.5" stroke="#1878f0" stroke-width="1" shape-rendering="crispEdges"/><polygon points="912.6,578.5 905.0,571.6 903.4,577.1" fill="none" stroke="#1878f0" stroke-width="1" shape-rendering="crispEdges"/><polyline points="901.2,576.2 905.0,571.6" fill="none" stroke="#1878f0" stroke-width="1" shape-rendering="crispEdges"/><line x1="907.4" y1="299.4" x2="948.8" y2="311.0" stroke="#1878f0" stroke-width="1" shape-rendering="crispEdges"/><polygon points="948.8,311.0 941.0,304.1 939.4,309.6" fill="none" stroke="#1878f0" stroke-width="1" shape-rendering="crispEdges"/><polyline points="937.2,308.7 941.0,304.1" fill="none" stroke="#1878f0" stroke-width="1" shape-rendering="crispEdges"/><line x1="934.7" y1="334.7" x2="981.1" y2="347.7" stroke="#1878f0" stroke-width="1" shape-rendering="crispEdges"/><polygon points="981.1,347.7 972.4,340.0 970.6,346.1" fill="none" stroke="#1878f0" stroke-width="1" shape-rendering="crispEdges"/><polyline points="968.1,345.2 972.4,340.0" fill="none" stroke="#1878f0" stroke-width="1" shape-rendering="crispEdges"/><line x1="887.3" y1="303.8" x2="944.2" y2="319.7" stroke="#20c8f0" stroke-width="1" shape-rendering="crispEdges"/><polygon points="944.2,319.7 933.5,310.2 931.3,317.7" fill="none" stroke="#20c8f0" stroke-width="1" shape-rendering="crispEdges"/><polyline points="928.3,316.5 933.5,310.2" fill="none" stroke="#20c8f0" stroke-width="1" shape-rendering="crispEdges"/><line x1="927.6" y1="332.5" x2="985.0" y2="348.6" stroke="#20c8f0" stroke-width="1" shape-rendering="crispEdges"/><polygon points="985.0,348.6 974.2,339.0 972.0,346.6" fill="none" stroke="#20c8f0" stroke-width="1" shape-rendering="crispEdges"/><polyline points="968.9,345.4 974.2,339.0" fill="none" stroke="#20c8f0" stroke-width="1" shape-rendering="crispEdges"/><line x1="877.3" y1="551.1" x2="937.6" y2="568.0" stroke="#20c8f0" stroke-width="1" shape-rendering="crispEdges"/><polygon points="937.6,568.0 926.2,557.9 923.9,565.9" fill="none" stroke="#20c8f0" stroke-width="1" shape-rendering="crispEdges"/><polyline points="920.7,564.6 926.2,557.9" fill="none" stroke="#20c8f0" stroke-width="1" shape-rendering="crispEdges"/><line x1="782.0" y1="443.7" x2="843.4" y2="460.9" stroke="#20c8f0" stroke-width="1" shape-rendering="crispEdges"/><polygon points="843.4,460.9 831.8,450.6 829.4,458.7" fill="none" stroke="#20c8f0" stroke-width="1" shape-rendering="crispEdges"/><polyline points="826.1,457.5 831.8,450.6" fill="none" stroke="#20c8f0" stroke-width="1" shape-rendering="crispEdges"/><line x1="778.4" y1="488.3" x2="840.7" y2="505.8" stroke="#20c8f0" stroke-width="1" shape-rendering="crispEdges"/><polygon points="840.7,505.8 828.9,495.3 826.5,503.6" fill="none" stroke="#20c8f0" stroke-width="1" shape-rendering="crispEdges"/><polyline points="823.1,502.3 828.9,495.3" fill="none" stroke="#20c8f0" stroke-width="1" shape-rendering="crispEdges"/><line x1="829.3" y1="572.7" x2="892.1" y2="590.3" stroke="#20c8f0" stroke-width="1" shape-rendering="crispEdges"/><polygon points="892.1,590.3 880.2,579.7 877.7,588.1" fill="none" stroke="#20c8f0" stroke-width="1" shape-rendering="crispEdges"/><polyline points="874.4,586.8 880.2,579.7" fill="none" stroke="#20c8f0" stroke-width="1" shape-rendering="crispEdges"/><line x1="846.9" y1="568.6" x2="912.1" y2="586.9" stroke="#20c8f0" stroke-width="1" shape-rendering="crispEdges"/><polygon points="912.1,586.9 899.6,575.9 897.1,584.6" fill="none" stroke="#20c8f0" stroke-width="1" shape-rendering="crispEdges"/><polyline points="893.6,583.2 899.6,575.9" fill="none" stroke="#20c8f0" stroke-width="1" shape-rendering="crispEdges"/><line x1="936.4" y1="417.0" x2="1002.1" y2="435.5" stroke="#20c8f0" stroke-width="1" shape-rendering="crispEdges"/><polygon points="1002.1,435.5 989.5,424.3 987.0,433.1" fill="none" stroke="#20c8f0" stroke-width="1" shape-rendering="crispEdges"/><polyline points="983.4,431.7 989.5,424.3" fill="none" stroke="#20c8f0" stroke-width="1" shape-rendering="crispEdges"/><line x1="853.4" y1="318.0" x2="920.4" y2="336.8" stroke="#20c8f0" stroke-width="1" shape-rendering="crispEdges"/><polygon points="920.4,336.8 907.5,325.5 904.9,334.4" fill="none" stroke="#20c8f0" stroke-width="1" shape-rendering="crispEdges"/><polyline points="901.3,333.0 907.5,325.5" fill="none" stroke="#20c8f0" stroke-width="1" shape-rendering="crispEdges"/><line x1="821.9" y1="349.9" x2="889.0" y2="368.8" stroke="#20c8f0" stroke-width="1" shape-rendering="crispEdges"/><polygon points="889.0,368.8 876.1,357.4 873.5,366.4" fill="none" stroke="#20c8f0" stroke-width="1" shape-rendering="crispEdges"/><polyline points="869.9,365.0 876.1,357.4" fill="none" stroke="#20c8f0" stroke-width="1" shape-rendering="crispEdges"/><line x1="905.9" y1="316.1" x2="977.4" y2="336.2" stroke="#20c8f0" stroke-width="1" shape-rendering="crispEdges"/><polygon points="977.4,336.2 963.5,323.9 960.7,333.6" fill="none" stroke="#20c8f0" stroke-width="1" shape-rendering="crispEdges"/><polyline points="956.8,332.1 963.5,323.9" fill="none" stroke="#20c8f0" stroke-width="1" shape-rendering="crispEdges"/><line x1="787.0" y1="522.0" x2="859.5" y2="542.3" stroke="#20c8f0" stroke-width="1" shape-rendering="crispEdges"/><polygon points="859.5,542.3 845.4,529.8 842.6,539.7" fill="none" stroke="#20c8f0" stroke-width="1" shape-rendering="crispEdges"/><polyline points="838.6,538.1 845.4,529.8" fill="none" stroke="#20c8f0" stroke-width="1" shape-rendering="crispEdges"/><line x1="798.9" y1="397.6" x2="872.7" y2="418.3" stroke="#30c830" stroke-width="1" shape-rendering="crispEdges"/><polygon points="872.7,418.3 858.3,405.6 855.3,415.6" fill="none" stroke="#30c830" stroke-width="1" shape-rendering="crispEdges"/><polyline points="851.3,414.1 858.3,405.6" fill="none" stroke="#30c830" stroke-width="1" shape-rendering="crispEdges"/><line x1="922.0" y1="470.2" x2="998.3" y2="491.5" stroke="#30c830" stroke-width="1" shape-rendering="crispEdges"/><polygon points="998.3,491.5 983.3,478.3 980.2,488.7" fill="none" stroke="#30c830" stroke-width="1" shape-rendering="crispEdges"/><polyline points="976.0,487.1 983.3,478.3" fill="none" stroke="#30c830" stroke-width="1" shape-rendering="crispEdges"/><line x1="803.4" y1="547.8" x2="882.1" y2="569.9" stroke="#30c830" stroke-width="1" shape-rendering="crispEdges"/><polygon points="882.1,569.9 866.5,556.2 863.3,567.0" fill="none" stroke="#30c830" stroke-width="1" shape-rendering="crispEdges"/><polyline points="858.9,565.3 866.5,556.2" fill="none" stroke="#30c830" stroke-width="1" shape-rendering="crispEdges"/><line x1="905.4" y1="504.0" x2="984.8" y2="526.2" stroke="#30c830" stroke-width="1" shape-rendering="crispEdges"/><polygon points="984.8,526.2 969.1,512.3 965.9,523.3" fill="none" stroke="#30c830" stroke-width="1" shape-rendering="crispEdges"/><polyline points="961.4,521.6 969.1,512.3" fill="none" stroke="#30c830" stroke-width="1" shape-rendering="crispEdges"/><line x1="933.3" y1="393.2" x2="1015.2" y2="416.1" stroke="#30c830" stroke-width="1" shape-rendering="crispEdges"/><polygon points="1015.2,416.1 998.8,401.7 995.5,413.1" fill="none" stroke="#30c830" stroke-width="1" shape-rendering="crispEdges"/><polyline points="990.9,411.3 998.8,401.7" fill="none" stroke="#30c830" stroke-width="1" shape-rendering="crispEdges"/><line x1="837.4" y1="348.4" x2="925.6" y2="373.2" stroke="#30c830" stroke-width="1" shape-rendering="crispEdges"/><polygon points="925.6,373.2 907.6,357.4 904.0,369.8" fill="none" stroke="#30c830" stroke-width="1" shape-rendering="crispEdges"/><polyline points="898.9,367.8 907.6,357.4" fill="none" stroke="#30c830" stroke-width="1" shape-rendering="crispEdges"/><line x1="804.3" y1="534.6" x2="892.9" y2="559.4" stroke="#30c830" stroke-width="1" shape-rendering="crispEdges"/><polygon points="892.9,559.4 874.8,543.6 871.2,556.1" fill="none" stroke="#30c830" stroke-width="1" shape-rendering="crispEdges"/><polyline points="866.1,554.1 874.8,543.6" fill="none" stroke="#30c830" stroke-width="1" shape-rendering="crispEdges"/><line x1="914.5" y1="346.6" x2="1005.0" y2="371.9" stroke="#88dc00" stroke-width="1" shape-rendering="crispEdges"/><polygon points="1005.0,371.9 986.4,355.6 982.7,368.5" fill="none" stroke="#88dc00" stroke-width="1" shape-rendering="crispEdges"/><polyline points="977.5,366.4 986.4,355.6" fill="none" stroke="#88dc00" stroke-width="1" shape-rendering="crispEdges"/><line x1="904.1" y1="496.3" x2="995.7" y2="521.9" stroke="#88dc00" stroke-width="1" shape-rendering="crispEdges"/><polygon points="995.7,521.9 976.8,505.4 973.0,518.4" fill="none" stroke="#88dc00" stroke-width="1" shape-rendering="crispEdges"/><polyline points="967.7,516.4 976.8,505.4" fill="none" stroke="#88dc00" stroke-width="1" shape-rendering="crispEdges"/><line x1="794.8" y1="511.2" x2="888.0" y2="537.4" stroke="#88dc00" stroke-width="1" shape-rendering="crispEdges"/><polygon points="888.0,537.4 868.8,520.4 864.9,533.8" fill="none" stroke="#88dc00" stroke-width="1" shape-rendering="crispEdges"/><polyline points="859.4,531.7 868.8,520.4" fill="none" stroke="#88dc00" stroke-width="1" shape-rendering="crispEdges"/><line x1="884.9" y1="324.7" x2="979.0" y2="351.1" stroke="#88dc00" stroke-width="1" shape-rendering="crispEdges"/><polygon points="979.0,351.1 959.5,333.9 955.5,347.4" fill="none" stroke="#88dc00" stroke-width="1" shape-rendering="crispEdges"/><polyline points="950.0,345.3 959.5,333.9" fill="none" stroke="#88dc00" stroke-width="1" shape-rendering="crispEdges"/><line x1="853.6" y1="340.8" x2="948.3" y2="367.3" stroke="#88dc00" stroke-width="1" shape-rendering="crispEdges"/><polygon points="948.3,367.3 928.6,350.0 924.6,363.6" fill="none" stroke="#88dc00" stroke-width="1" shape-rendering="crispEdges"/><polyline points="919.1,361.5 928.6,350.0" fill="none" stroke="#88dc00" stroke-width="1" shape-rendering="crispEdges"/><line x1="799.4" y1="434.9" x2="896.5" y2="462.2" stroke="#88dc00" stroke-width="1" shape-rendering="crispEdges"/><polygon points="896.5,462.2 876.2,444.3 872.1,458.4" fill="none" stroke="#88dc00" stroke-width="1" shape-rendering="crispEdges"/><polyline points="866.4,456.1 876.2,444.3" fill="none" stroke="#88dc00" stroke-width="1" shape-rendering="crispEdges"/><line x1="905.3" y1="336.6" x2="1003.4" y2="364.1" stroke="#88dc00" stroke-width="1" shape-rendering="crispEdges"/><polygon points="1003.4,364.1 982.8,346.0 978.6,360.2" fill="none" stroke="#88dc00" stroke-width="1" shape-rendering="crispEdges"/><polyline points="972.8,358.0 982.8,346.0" fill="none" stroke="#88dc00" stroke-width="1" shape-rendering="crispEdges"/><line x1="920.6" y1="381.4" x2="1018.9" y2="409.0" stroke="#88dc00" stroke-width="1" shape-rendering="crispEdges"/><polygon points="1018.9,409.0 998.3,390.9 994.1,405.2" fill="none" stroke="#88dc00" stroke-width="1" shape-rendering="crispEdges"/><polyline points="988.3,402.9 998.3,390.9" fill="none" stroke="#88dc00" stroke-width="1" shape-rendering="crispEdges"/><line x1="924.2" y1="413.9" x2="1022.7" y2="441.5" stroke="#88dc00" stroke-width="1" shape-rendering="crispEdges"/><polygon points="1022.7,441.5 1002.0,423.3 997.9,437.6" fill="none" stroke="#88dc00" stroke-width="1" shape-rendering="crispEdges"/><polyline points="992.0,435.3 1002.0,423.3" fill="none" stroke="#88dc00" stroke-width="1" shape-rendering="crispEdges"/><line x1="913.8" y1="462.6" x2="1012.6" y2="490.3" stroke="#88dc00" stroke-width="1" shape-rendering="crispEdges"/><polygon points="1012.6,490.3 991.8,472.1 987.7,486.4" fill="none" stroke="#88dc00" stroke-width="1" shape-rendering="crispEdges"/><polyline points="981.8,484.2 991.8,472.1" fill="none" stroke="#88dc00" stroke-width="1" shape-rendering="crispEdges"/><line x1="822.2" y1="541.1" x2="922.4" y2="569.2" stroke="#88dc00" stroke-width="1" shape-rendering="crispEdges"/><polygon points="922.4,569.2 901.3,550.6 897.0,565.3" fill="none" stroke="#88dc00" stroke-width="1" shape-rendering="crispEdges"/><polyline points="891.1,562.9 901.3,550.6" fill="none" stroke="#88dc00" stroke-width="1" shape-rendering="crispEdges"/><line x1="796.5" y1="475.5" x2="897.1" y2="503.7" stroke="#88dc00" stroke-width="1" shape-rendering="crispEdges"/><polygon points="897.1,503.7 875.8,485.1 871.5,499.8" fill="none" stroke="#88dc00" stroke-width="1" shape-rendering="crispEdges"/><polyline points="865.5,497.4 875.8,485.1" fill="none" stroke="#88dc00" stroke-width="1" shape-rendering="crispEdges"/><line x1="844.5" y1="543.2" x2="945.1" y2="571.4" stroke="#88dc00" stroke-width="1" shape-rendering="crispEdges"/><polygon points="945.1,571.4 923.8,552.7 919.6,567.4" fill="none" stroke="#88dc00" stroke-width="1" shape-rendering="crispEdges"/><polyline points="913.6,565.1 923.8,552.7" fill="none" stroke="#88dc00" stroke-width="1" shape-rendering="crispEdges"/><line x1="875.2" y1="524.9" x2="976.4" y2="553.2" stroke="#88dc00" stroke-width="1" shape-rendering="crispEdges"/><polygon points="976.4,553.2 955.0,534.4 950.7,549.2" fill="none" stroke="#88dc00" stroke-width="1" shape-rendering="crispEdges"/><polyline points="944.6,546.9 955.0,534.4" fill="none" stroke="#88dc00" stroke-width="1" shape-rendering="crispEdges"/><line x1="811.1" y1="399.6" x2="915.3" y2="428.8" stroke="#d8d800" stroke-width="1" shape-rendering="crispEdges"/><polygon points="915.3,428.8 893.0,409.2 888.5,424.6" fill="none" stroke="#d8d800" stroke-width="1" shape-rendering="crispEdges"/><polyline points="882.3,422.2 893.0,409.2" fill="none" stroke="#d8d800" stroke-width="1" shape-rendering="crispEdges"/><line x1="863.8" y1="353.4" x2="976.3" y2="384.9" stroke="#d8d800" stroke-width="1" shape-rendering="crispEdges"/><polygon points="976.3,384.9 951.7,363.4 946.7,380.3" fill="none" stroke="#d8d800" stroke-width="1" shape-rendering="crispEdges"/><polyline points="939.8,377.6 951.7,363.4" fill="none" stroke="#d8d800" stroke-width="1" shape-rendering="crispEdges"/><line x1="906.0" y1="453.7" x2="1019.7" y2="485.6" stroke="#f09000" stroke-width="1" shape-rendering="crispEdges"/><polygon points="1019.7,485.6 994.7,463.7 989.7,480.9" fill="none" stroke="#f09000" stroke-width="1" shape-rendering="crispEdges"/><polyline points="982.7,478.2 994.7,463.7" fill="none" stroke="#f09000" stroke-width="1" shape-rendering="crispEdges"/><line x1="892.9" y1="479.5" x2="1007.5" y2="511.6" stroke="#f09000" stroke-width="1" shape-rendering="crispEdges"/><polygon points="1007.5,511.6 982.3,489.5 977.2,506.9" fill="none" stroke="#f09000" stroke-width="1" shape-rendering="crispEdges"/><polyline points="970.1,504.1 982.3,489.5" fill="none" stroke="#f09000" stroke-width="1" shape-rendering="crispEdges"/><line x1="864.0" y1="517.4" x2="979.2" y2="549.7" stroke="#f09000" stroke-width="1" shape-rendering="crispEdges"/><polygon points="979.2,549.7 953.8,527.4 948.7,544.9" fill="none" stroke="#f09000" stroke-width="1" shape-rendering="crispEdges"/><polyline points="941.5,542.2 953.8,527.4" fill="none" stroke="#f09000" stroke-width="1" shape-rendering="crispEdges"/><line x1="845.8" y1="521.7" x2="961.3" y2="554.1" stroke="#f09000" stroke-width="1" shape-rendering="crispEdges"/><polygon points="961.3,554.1 935.8,531.8 930.7,549.3" fill="none" stroke="#f09000" stroke-width="1" shape-rendering="crispEdges"/><polyline points="923.5,546.6 935.8,531.8" fill="none" stroke="#f09000" stroke-width="1" shape-rendering="crispEdges"/><line x1="884.5" y1="354.0" x2="1002.4" y2="387.0" stroke="#f09000" stroke-width="1" shape-rendering="crispEdges"/><polygon points="1002.4,387.0 976.2,364.1 971.0,382.1" fill="none" stroke="#f09000" stroke-width="1" shape-rendering="crispEdges"/><polyline points="963.6,379.3 976.2,364.1" fill="none" stroke="#f09000" stroke-width="1" shape-rendering="crispEdges"/><line x1="904.7" y1="386.8" x2="1023.7" y2="420.2" stroke="#f09000" stroke-width="1" shape-rendering="crispEdges"/><polygon points="1023.7,420.2 997.2,397.0 991.8,415.2" fill="none" stroke="#f09000" stroke-width="1" shape-rendering="crispEdges"/><polyline points="984.3,412.3 997.2,397.0" fill="none" stroke="#f09000" stroke-width="1" shape-rendering="crispEdges"/><line x1="838.3" y1="381.6" x2="959.6" y2="415.6" stroke="#f09000" stroke-width="1" shape-rendering="crispEdges"/><polygon points="959.6,415.6 932.4,391.7 926.9,410.5" fill="none" stroke="#f09000" stroke-width="1" shape-rendering="crispEdges"/><polyline points="919.3,407.5 932.4,391.7" fill="none" stroke="#f09000" stroke-width="1" shape-rendering="crispEdges"/><line x1="831.8" y1="496.1" x2="956.0" y2="531.0" stroke="#f09000" stroke-width="1" shape-rendering="crispEdges"/><polygon points="956.0,531.0 927.9,506.4 922.3,525.7" fill="none" stroke="#f09000" stroke-width="1" shape-rendering="crispEdges"/><polyline points="914.4,522.6 927.9,506.4" fill="none" stroke="#f09000" stroke-width="1" shape-rendering="crispEdges"/><line x1="808.1" y1="468.8" x2="932.5" y2="503.7" stroke="#f09000" stroke-width="1" shape-rendering="crispEdges"/><polygon points="932.5,503.7 904.4,479.0 898.7,498.4" fill="none" stroke="#f09000" stroke-width="1" shape-rendering="crispEdges"/><polyline points="890.8,495.3 904.4,479.0" fill="none" stroke="#f09000" stroke-width="1" shape-rendering="crispEdges"/><line x1="826.4" y1="515.9" x2="951.0" y2="550.8" stroke="#f09000" stroke-width="1" shape-rendering="crispEdges"/><polygon points="951.0,550.8 922.8,526.1 917.1,545.5" fill="none" stroke="#f09000" stroke-width="1" shape-rendering="crispEdges"/><polyline points="909.2,542.5 922.8,526.1" fill="none" stroke="#f09000" stroke-width="1" shape-rendering="crispEdges"/><line x1="810.5" y1="446.0" x2="936.0" y2="481.2" stroke="#e84000" stroke-width="1" shape-rendering="crispEdges"/><polygon points="936.0,481.2 907.5,456.3 901.8,475.9" fill="none" stroke="#e84000" stroke-width="1" shape-rendering="crispEdges"/><polyline points="893.8,472.8 907.5,456.3" fill="none" stroke="#e84000" stroke-width="1" shape-rendering="crispEdges"/><line x1="908.2" y1="428.8" x2="1034.5" y2="464.2" stroke="#e84000" stroke-width="1" shape-rendering="crispEdges"/><polygon points="1034.5,464.2 1005.8,439.1 1000.0,458.8" fill="none" stroke="#e84000" stroke-width="1" shape-rendering="crispEdges"/><polyline points="991.9,455.7 1005.8,439.1" fill="none" stroke="#e84000" stroke-width="1" shape-rendering="crispEdges"/><line x1="863.5" y1="492.0" x2="989.9" y2="527.5" stroke="#e84000" stroke-width="1" shape-rendering="crispEdges"/><polygon points="989.9,527.5 961.2,502.3 955.4,522.1" fill="none" stroke="#e84000" stroke-width="1" shape-rendering="crispEdges"/><polyline points="947.3,519.0 961.2,502.3" fill="none" stroke="#e84000" stroke-width="1" shape-rendering="crispEdges"/><line x1="898.3" y1="373.3" x2="1024.8" y2="408.7" stroke="#e84000" stroke-width="1" shape-rendering="crispEdges"/><polygon points="1024.8,408.7 996.0,383.5 990.3,403.3" fill="none" stroke="#e84000" stroke-width="1" shape-rendering="crispEdges"/><polyline points="982.1,400.2 996.0,383.5" fill="none" stroke="#e84000" stroke-width="1" shape-rendering="crispEdges"/><line x1="824.8" y1="401.1" x2="951.8" y2="436.7" stroke="#e84000" stroke-width="1" shape-rendering="crispEdges"/><polygon points="951.8,436.7 922.9,411.4 917.1,431.3" fill="none" stroke="#e84000" stroke-width="1" shape-rendering="crispEdges"/><polyline points="908.9,428.2 922.9,411.4" fill="none" stroke="#e84000" stroke-width="1" shape-rendering="crispEdges"/><line x1="881.8" y1="465.3" x2="1008.8" y2="500.9" stroke="#e84000" stroke-width="1" shape-rendering="crispEdges"/><polygon points="1008.8,500.9 979.9,475.5 974.1,495.5" fill="none" stroke="#e84000" stroke-width="1" shape-rendering="crispEdges"/><polyline points="965.9,492.3 979.9,475.5" fill="none" stroke="#e84000" stroke-width="1" shape-rendering="crispEdges"/><line x1="817.3" y1="501.3" x2="946.0" y2="537.3" stroke="#e84000" stroke-width="1" shape-rendering="crispEdges"/><polygon points="946.0,537.3 916.5,511.6 910.6,531.8" fill="none" stroke="#e84000" stroke-width="1" shape-rendering="crispEdges"/><polyline points="902.3,528.6 916.5,511.6" fill="none" stroke="#e84000" stroke-width="1" shape-rendering="crispEdges"/><line x1="820.8" y1="464.7" x2="950.3" y2="501.0" stroke="#e84000" stroke-width="1" shape-rendering="crispEdges"/><polygon points="950.3,501.0 920.6,475.0 914.7,495.5" fill="none" stroke="#e84000" stroke-width="1" shape-rendering="crispEdges"/><polyline points="906.3,492.2 920.6,475.0" fill="none" stroke="#e84000" stroke-width="1" shape-rendering="crispEdges"/><line x1="840.2" y1="404.6" x2="969.9" y2="440.9" stroke="#e84000" stroke-width="1" shape-rendering="crispEdges"/><polygon points="969.9,440.9 940.1,414.9 934.2,435.4" fill="none" stroke="#e84000" stroke-width="1" shape-rendering="crispEdges"/><polyline points="925.8,432.1 940.1,414.9" fill="none" stroke="#e84000" stroke-width="1" shape-rendering="crispEdges"/><line x1="878.2" y1="382.0" x2="1008.0" y2="418.4" stroke="#e84000" stroke-width="1" shape-rendering="crispEdges"/><polygon points="1008.0,418.4 978.2,392.3 972.2,412.8" fill="none" stroke="#e84000" stroke-width="1" shape-rendering="crispEdges"/><polyline points="963.8,409.6 978.2,392.3" fill="none" stroke="#e84000" stroke-width="1" shape-rendering="crispEdges"/><line x1="844.0" y1="503.1" x2="974.3" y2="539.6" stroke="#e84000" stroke-width="1" shape-rendering="crispEdges"/><polygon points="974.3,539.6 944.4,513.4 938.4,534.0" fill="none" stroke="#e84000" stroke-width="1" shape-rendering="crispEdges"/><polyline points="929.9,530.7 944.4,513.4" fill="none" stroke="#e84000" stroke-width="1" shape-rendering="crispEdges"/><line x1="893.0" y1="398.4" x2="1025.0" y2="435.4" stroke="#e00000" stroke-width="1" shape-rendering="crispEdges"/><polygon points="1025.0,435.4 994.5,408.7 988.4,429.6" fill="none" stroke="#e00000" stroke-width="1" shape-rendering="crispEdges"/><polyline points="979.8,426.3 994.5,408.7" fill="none" stroke="#e00000" stroke-width="1" shape-rendering="crispEdges"/><line x1="841.2" y1="461.8" x2="974.4" y2="499.1" stroke="#e00000" stroke-width="1" shape-rendering="crispEdges"/><polygon points="974.4,499.1 943.5,472.1 937.3,493.3" fill="none" stroke="#e00000" stroke-width="1" shape-rendering="crispEdges"/><polyline points="928.6,490.0 943.5,472.1" fill="none" stroke="#e00000" stroke-width="1" shape-rendering="crispEdges"/><line x1="856.0" y1="379.4" x2="991.0" y2="417.2" stroke="#e00000" stroke-width="1" shape-rendering="crispEdges"/><polygon points="991.0,417.2 959.6,389.7 953.3,411.3" fill="none" stroke="#e00000" stroke-width="1" shape-rendering="crispEdges"/><polyline points="944.4,407.9 959.6,389.7" fill="none" stroke="#e00000" stroke-width="1" shape-rendering="crispEdges"/><line x1="873.1" y1="420.2" x2="1009.0" y2="458.3" stroke="#e00000" stroke-width="1" shape-rendering="crispEdges"/><polygon points="1009.0,458.3 977.2,430.5 970.9,452.3" fill="none" stroke="#e00000" stroke-width="1" shape-rendering="crispEdges"/><polyline points="962.0,448.9 977.2,430.5" fill="none" stroke="#e00000" stroke-width="1" shape-rendering="crispEdges"/><line x1="893.6" y1="430.4" x2="1031.3" y2="469.0" stroke="#e00000" stroke-width="1" shape-rendering="crispEdges"/><polygon points="1031.3,469.0 999.0,440.8 992.6,463.0" fill="none" stroke="#e00000" stroke-width="1" shape-rendering="crispEdges"/><polyline points="983.4,459.5 999.0,440.8" fill="none" stroke="#e00000" stroke-width="1" shape-rendering="crispEdges"/><line x1="830.9" y1="429.4" x2="969.0" y2="468.1" stroke="#e00000" stroke-width="1" shape-rendering="crispEdges"/><polygon points="969.0,468.1 936.6,439.7 930.1,462.0" fill="none" stroke="#e00000" stroke-width="1" shape-rendering="crispEdges"/><polyline points="920.9,458.5 936.6,439.7" fill="none" stroke="#e00000" stroke-width="1" shape-rendering="crispEdges"/><line x1="856.5" y1="469.5" x2="996.1" y2="508.7" stroke="#e00000" stroke-width="1" shape-rendering="crispEdges"/><polygon points="996.1,508.7 963.2,479.9 956.6,502.5" fill="none" stroke="#e00000" stroke-width="1" shape-rendering="crispEdges"/><polyline points="947.3,498.9 963.2,479.9" fill="none" stroke="#e00000" stroke-width="1" shape-rendering="crispEdges"/><line x1="873.1" y1="450.7" x2="1013.4" y2="490.1" stroke="#e00000" stroke-width="1" shape-rendering="crispEdges"/><polygon points="1013.4,490.1 980.3,461.1 973.7,483.8" fill="none" stroke="#e00000" stroke-width="1" shape-rendering="crispEdges"/><polyline points="964.3,480.2 980.3,461.1" fill="none" stroke="#e00000" stroke-width="1" shape-rendering="crispEdges"/><line x1="858.8" y1="439.7" x2="999.4" y2="479.2" stroke="#e00000" stroke-width="1" shape-rendering="crispEdges"/><polygon points="999.4,479.2 966.2,450.1 959.5,472.9" fill="none" stroke="#e00000" stroke-width="1" shape-rendering="crispEdges"/><polyline points="950.2,469.3 966.2,450.1" fill="none" stroke="#e00000" stroke-width="1" shape-rendering="crispEdges"/><line x1="863.7" y1="404.3" x2="1004.3" y2="443.7" stroke="#e00000" stroke-width="1" shape-rendering="crispEdges"/><polygon points="1004.3,443.7 971.1,414.7 964.5,437.5" fill="none" stroke="#e00000" stroke-width="1" shape-rendering="crispEdges"/><polyline points="955.1,433.9 971.1,414.7" fill="none" stroke="#e00000" stroke-width="1" shape-rendering="crispEdges"/><line x1="842.8" y1="423.9" x2="983.4" y2="463.3" stroke="#e00000" stroke-width="1" shape-rendering="crispEdges"/><polygon points="983.4,463.3 950.2,434.3 943.5,457.1" fill="none" stroke="#e00000" stroke-width="1" shape-rendering="crispEdges"/><polyline points="934.2,453.5 950.2,434.3" fill="none" stroke="#e00000" stroke-width="1" shape-rendering="crispEdges"/></g></svg>
<svg class="r" style="left:340px;top:685px" width="70" height="70" viewBox="0 0 70 70"><g transform="translate(-340,-685)">
<path d="M357.5 736V712" stroke="#10b010" stroke-width="3"/><path d="M353 716L357.8 699.5L362 716Z" fill="#10c010"/>
<path d="M357.5 736L379 724" stroke="#ff0000" stroke-width="2.5"/><path d="M367 727L380 723.5L373 733Z" fill="#c00000"/>
<path d="M357 737L389.5 744.5" stroke="#0000d0" stroke-width="3"/><path d="M375 738L390 745L376 746Z" fill="#0000e0"/>
<text x="357" y="704" font-family="Liberation Sans" font-size="11" font-weight="bold" fill="#000">Y</text>
<text x="376" y="726" font-family="Liberation Sans" font-size="11" font-weight="bold" fill="#000">X</text>
<text x="385" y="745" font-family="Liberation Sans" font-size="11" font-weight="bold" fill="#000">Z</text></g></svg>
<div class="r" style="left:1039px;top:51px;width:1px;height:801px;background:#e8e8e7"></div>
<div class="r" style="left:1127px;top:51px;width:1px;height:801px;background:#b4b4b3"></div>
<div class="r" style="left:1130px;top:12px;width:1px;height:861px;background:#6a6a6a"></div>
<div class="r" style="left:1131px;top:12px;width:1px;height:861px;background:#e0e0e0"></div>
<svg class="r" style="left:1118px;top:0px" width="14" height="14" viewBox="0 0 14 14"><path d="M0 0L0 0.5C8 0.5 12.5 5 12.5 13L14 13L14 0Z" fill="#ffffff"/><path d="M0 0.5C8 0.5 12.5 5 12.5 13" stroke="#6a6a6a" fill="none"/></svg>
<svg class="r" style="left:1049px;top:62px" width="24" height="24" viewBox="0 0 24 24"><defs><linearGradient id="gdoc" x1="0" y1="0" x2="1" y2="1"><stop offset="0" stop-color="#c8d4ff"/><stop offset="1" stop-color="#eef2ff"/></linearGradient><radialGradient id="gsph" cx="0.35" cy="0.35" r="0.7"><stop offset="0" stop-color="#f0f4ff"/><stop offset="0.45" stop-color="#4a5ee8"/><stop offset="1" stop-color="#101a80"/></radialGradient><linearGradient id="gsurf" x1="0" y1="0" x2="1" y2="1"><stop offset="0" stop-color="#a8b8f0"/><stop offset="1" stop-color="#e8eeff"/></linearGradient></defs><g transform="translate(0,0)"><path d="M4 4C6 1 9 3 11 1.5C12.5 0.5 13.5 1 13 2" stroke="#222" stroke-width="1.1" fill="none"/><rect x="1.5" y="4.5" width="13" height="11" rx="1" fill="#fff" stroke="#222" stroke-width="1.2"/><rect x="1.5" y="4.5" width="13" height="2.5" fill="#fff" stroke="#222" stroke-width="0.8" stroke-dasharray="1 1"/><rect x="1.5" y="14" width="13" height="2" fill="#222"/><circle cx="2.5" cy="5" r="1.5" fill="#f0f000"/><path d="M3 8.5l1.5 1.5l1.5-1.5M3 11.5l1.5-1.5l1.5 1.5" stroke="#f00010" stroke-width="1.1" fill="none"/><path d="M7.5 8.5l1.5 1.5l1.5-1.5M7.5 11.5l1.5-1.5l1.5 1.5" stroke="#0010f0" stroke-width="1.1" fill="none"/><rect x="11" y="8.5" width="11.5" height="15" fill="url(#gdoc)" stroke="#7a88d8" stroke-width="1.2"/><path d="M15 12h6M15 16h6M15 20h6" stroke="#b8c0e0" stroke-width="1.2"/><path d="M12.5 12h2M12.5 16h2M12.5 20h2" stroke="#e8e000" stroke-width="1.6"/></g></svg>
<svg class="r" style="left:1049px;top:98px" width="24" height="24" viewBox="0 0 24 24"><text x="6" y="7.8" font-size="7.8" font-weight="bold" font-family="Liberation Serif" fill="#111">Ascii</text><path d="M0.5 0.5V23H23" stroke="#5058b0" fill="none" stroke-width="1.1"/><path d="M1 22.5C4 16 8 17 11 15.5C14 14 16 12 18 7.5" stroke="#20b020" fill="none" stroke-width="1.3"/><path d="M3 23v-1.5M6 23v-1.5M9 23v-1.5M12 23v-1.5M15 23v-1.5M18 23v-1.5M21 23v-1.5M0.5 5h1.5M0.5 8h1.5M0.5 11h1.5M0.5 14h1.5M0.5 17h1.5M0.5 20h1.5" stroke="#5058b0" stroke-width="0.9"/></svg>
<svg class="r" style="left:1049px;top:134px" width="24" height="24" viewBox="0 0 24 24"><path d="M0.5 1V23H23" stroke="#5058b0" fill="none" stroke-width="1.1"/><path d="M3 23v-1.5M6 23v-1.5M9 23v-1.5M12 23v-1.5M15 23v-1.5M18 23v-1.5M21 23v-1.5M0.5 5h1.5M0.5 8h1.5M0.5 11h1.5M0.5 14h1.5M0.5 17h1.5M0.5 20h1.5" stroke="#5058b0" stroke-width="0.9"/><text x="2.3" y="15.6" font-size="10.5" font-family="Liberation Sans" fill="#111" transform="scale(0.95 1)">LSO</text><path d="M1 22.5C3 18 6 17 10 15.5" stroke="#20b020" fill="none" stroke-width="1.3"/></svg>
<svg class="r" style="left:1049px;top:170px" width="24" height="24" viewBox="0 0 24 24"><path d="M2 2V12.5" stroke="#333" stroke-width="1"/><path d="M7.2 2V12.5" stroke="#333" stroke-width="1"/><path d="M12.4 2V12.5" stroke="#333" stroke-width="1"/><path d="M2 2H12.4" stroke="#333" stroke-width="1"/><path d="M2 7.3H12.4" stroke="#333" stroke-width="1"/><path d="M2 12.5H12.4" stroke="#333" stroke-width="1"/><circle cx="2" cy="2" r="1.5" fill="#fff" stroke="#1a1aa8" stroke-width="1.1"/><circle cx="2" cy="7.3" r="1.5" fill="#fff" stroke="#1a1aa8" stroke-width="1.1"/><circle cx="2" cy="12.5" r="1.5" fill="#fff" stroke="#1a1aa8" stroke-width="1.1"/><circle cx="7.2" cy="2" r="1.5" fill="#fff" stroke="#1a1aa8" stroke-width="1.1"/><circle cx="7.2" cy="7.3" r="1.5" fill="#fff" stroke="#1a1aa8" stroke-width="1.1"/><circle cx="7.2" cy="12.5" r="1.5" fill="#fff" stroke="#1a1aa8" stroke-width="1.1"/><circle cx="12.4" cy="2" r="1.5" fill="#fff" stroke="#1a1aa8" stroke-width="1.1"/><circle cx="12.4" cy="7.3" r="1.5" fill="#fff" stroke="#1a1aa8" stroke-width="1.1"/><circle cx="12.4" cy="12.5" r="1.5" fill="#fff" stroke="#1a1aa8" stroke-width="1.1"/><rect x="10.4" y="10.5" width="12.5" height="12" fill="#f4f4fa" stroke="#7070a8" stroke-width="1.2"/><path d="M16.5 13.5V14.5M16.5 16V21M15 21H18M15 16H16.5" stroke="#101040" stroke-width="1.8"/></svg>
<svg class="r" style="left:1049px;top:206px" width="24" height="24" viewBox="0 0 24 24"><path d="M2.4 2.2V12.3" stroke="#333" stroke-width="1"/><path d="M7.5 2.2V12.3" stroke="#333" stroke-width="1"/><path d="M12.5 2.2V12.3" stroke="#333" stroke-width="1"/><path d="M2.4 2.2H12.5" stroke="#333" stroke-width="1"/><path d="M2.4 7.3H12.5" stroke="#333" stroke-width="1"/><path d="M2.4 12.3H12.5" stroke="#333" stroke-width="1"/><circle cx="2.4" cy="2.2" r="1.5" fill="#fff" stroke="#1a1aa8" stroke-width="1.1"/><circle cx="2.4" cy="7.3" r="1.5" fill="#fff" stroke="#1a1aa8" stroke-width="1.1"/><circle cx="2.4" cy="12.3" r="1.5" fill="#fff" stroke="#1a1aa8" stroke-width="1.1"/><circle cx="7.5" cy="2.2" r="1.5" fill="#fff" stroke="#1a1aa8" stroke-width="1.1"/><circle cx="7.5" cy="7.3" r="1.5" fill="#fff" stroke="#1a1aa8" stroke-width="1.1"/><circle cx="7.5" cy="12.3" r="1.5" fill="#fff" stroke="#1a1aa8" stroke-width="1.1"/><circle cx="12.5" cy="2.2" r="1.5" fill="#fff" stroke="#1a1aa8" stroke-width="1.1"/><circle cx="12.5" cy="7.3" r="1.5" fill="#fff" stroke="#1a1aa8" stroke-width="1.1"/><circle cx="12.5" cy="12.3" r="1.5" fill="#fff" stroke="#1a1aa8" stroke-width="1.1"/><path d="M18 17.5L23 22.5" stroke="#556" stroke-width="2.6" stroke-linecap="round"/><circle cx="14.3" cy="13.7" r="5.3" fill="#8cd0f0" stroke="#555" stroke-width="1.3"/><circle cx="13" cy="12.3" r="2" fill="#d8f2ff"/></svg>
<svg class="r" style="left:1049px;top:242px" width="24" height="24" viewBox="0 0 24 24"><path d="M3 4.5L6 1.5L22.5 16.5L19.5 19.5Z" fill="#f0d868" stroke="#b08020" stroke-width="1"/><path d="M8 6l1-1M11 8.5l1-1M14 11.5l1-1M17 14l1-1" stroke="#b08020" stroke-width="0.8"/><path d="M2 12.5V21.5" stroke="#333" stroke-width="1"/><path d="M6.5 12.5V21.5" stroke="#333" stroke-width="1"/><path d="M11 12.5V21.5" stroke="#333" stroke-width="1"/><path d="M2 12.5H11" stroke="#333" stroke-width="1"/><path d="M2 17H11" stroke="#333" stroke-width="1"/><path d="M2 21.5H11" stroke="#333" stroke-width="1"/><circle cx="2" cy="12.5" r="1.5" fill="#fff" stroke="#1a1aa8" stroke-width="1.1"/><circle cx="2" cy="17" r="1.5" fill="#fff" stroke="#1a1aa8" stroke-width="1.1"/><circle cx="2" cy="21.5" r="1.5" fill="#fff" stroke="#1a1aa8" stroke-width="1.1"/><circle cx="6.5" cy="12.5" r="1.5" fill="#fff" stroke="#1a1aa8" stroke-width="1.1"/><circle cx="6.5" cy="17" r="1.5" fill="#fff" stroke="#1a1aa8" stroke-width="1.1"/><circle cx="6.5" cy="21.5" r="1.5" fill="#fff" stroke="#1a1aa8" stroke-width="1.1"/><circle cx="11" cy="12.5" r="1.5" fill="#fff" stroke="#1a1aa8" stroke-width="1.1"/><circle cx="11" cy="17" r="1.5" fill="#fff" stroke="#1a1aa8" stroke-width="1.1"/><circle cx="11" cy="21.5" r="1.5" fill="#fff" stroke="#1a1aa8" stroke-width="1.1"/></svg>
<svg class="r" style="left:1093px;top:62px" width="24" height="24" viewBox="0 0 24 24"><path d="M2.5 0.8L19.5 3.5V22.5L2.5 19.5Z" fill="#e4f4e4" stroke="#222" stroke-width="1.3"/><path d="M6 22V6" stroke="#2030e0" stroke-width="1.6"/><path d="M3 7.5L6 1.5L9 7.5Z" fill="#2030e0"/><circle cx="13" cy="12.5" r="3.2" fill="none" stroke="#222" stroke-width="1.2"/><path d="M13 7V18M8.5 12.5H17.5" stroke="#222" stroke-width="1.1"/></svg>
<svg class="r" style="left:1093px;top:98px" width="24" height="24" viewBox="0 0 24 24"><path d="M3 5.5C6 7 5 11 5.5 14C6 18 8 20 10 19C12 18 12 14 14 11C16 8 18 6 21 4.5" stroke="#222" stroke-width="2.2" fill="none"/><circle cx="3" cy="5.5" r="2.4" fill="#e82020" stroke="#600" stroke-width="0.8"/><circle cx="10" cy="19" r="2.4" fill="#e82020" stroke="#600" stroke-width="0.8"/><circle cx="21" cy="4.5" r="2.4" fill="#e82020" stroke="#600" stroke-width="0.8"/></svg>
<svg class="r" style="left:1093px;top:134px" width="24" height="24" viewBox="0 0 24 24"><defs><linearGradient id="gdoc" x1="0" y1="0" x2="1" y2="1"><stop offset="0" stop-color="#c8d4ff"/><stop offset="1" stop-color="#eef2ff"/></linearGradient><radialGradient id="gsph" cx="0.35" cy="0.35" r="0.7"><stop offset="0" stop-color="#f0f4ff"/><stop offset="0.45" stop-color="#4a5ee8"/><stop offset="1" stop-color="#101a80"/></radialGradient><linearGradient id="gsurf" x1="0" y1="0" x2="1" y2="1"><stop offset="0" stop-color="#a8b8f0"/><stop offset="1" stop-color="#e8eeff"/></linearGradient></defs><path d="M1.3 15.2L11.3 5.2L23.3 9.2C20 11 16 14 13.3 19.6Z" fill="url(#gsurf)" stroke="#111" stroke-width="1.3" stroke-linejoin="round"/></svg>
<svg class="r" style="left:1093px;top:170px" width="24" height="24" viewBox="0 0 24 24"><defs><linearGradient id="gdoc" x1="0" y1="0" x2="1" y2="1"><stop offset="0" stop-color="#c8d4ff"/><stop offset="1" stop-color="#eef2ff"/></linearGradient><radialGradient id="gsph" cx="0.35" cy="0.35" r="0.7"><stop offset="0" stop-color="#f0f4ff"/><stop offset="0.45" stop-color="#4a5ee8"/><stop offset="1" stop-color="#101a80"/></radialGradient><linearGradient id="gsurf" x1="0" y1="0" x2="1" y2="1"><stop offset="0" stop-color="#a8b8f0"/><stop offset="1" stop-color="#e8eeff"/></linearGradient></defs><circle cx="10" cy="8" r="7.8" fill="url(#gsph)"/><path d="M7 13L15 10.5L23 13V21.5L15 24L7 21.5Z" fill="#2a3ed0"/><path d="M7 13L15 10.5L23 13L15 15.5Z" fill="#6c7cf4"/><path d="M15 15.5V24L23 21.5V13Z" fill="#0c1690"/></svg>
<svg class="r" style="left:1093px;top:206px" width="24" height="24" viewBox="0 0 24 24"><path d="M3.3 5L12.5 1L23.5 4V16L14 20.5L3.3 16.5Z" fill="#2838d0"/><path d="M3.3 5L12.5 1L23.5 4L14 8Z" fill="#7888f8"/><path d="M14 8V20.5L23.5 16V4Z" fill="#0c1890"/><path d="M13 11.5A3.5 3.5 0 1 0 13 17" stroke="#c8c8d0" stroke-width="2.3" fill="none"/><path d="M9 16L2.5 22" stroke="#e09030" stroke-width="3" stroke-linecap="round"/></svg>
<svg class="r" style="left:1093px;top:253px" width="24" height="24" viewBox="0 0 24 24"><defs><linearGradient id="gdoc" x1="0" y1="0" x2="1" y2="1"><stop offset="0" stop-color="#c8d4ff"/><stop offset="1" stop-color="#eef2ff"/></linearGradient><radialGradient id="gsph" cx="0.35" cy="0.35" r="0.7"><stop offset="0" stop-color="#f0f4ff"/><stop offset="0.45" stop-color="#4a5ee8"/><stop offset="1" stop-color="#101a80"/></radialGradient><linearGradient id="gsurf" x1="0" y1="0" x2="1" y2="1"><stop offset="0" stop-color="#a8b8f0"/><stop offset="1" stop-color="#e8eeff"/></linearGradient></defs><path d="M1 12.5C3 7 6 5 9 4.5L17 3.5C14 5 13 8 12 11.5Z" fill="url(#gsurf)" stroke="#3040e0" stroke-width="1.6"/><path d="M9.3 10.2V22.8" stroke="#333" stroke-width="1"/><path d="M15.6 10.2V22.8" stroke="#333" stroke-width="1"/><path d="M21.8 10.2V22.8" stroke="#333" stroke-width="1"/><path d="M9.3 10.2H21.8" stroke="#333" stroke-width="1"/><path d="M9.3 16.6H21.8" stroke="#333" stroke-width="1"/><path d="M9.3 22.8H21.8" stroke="#333" stroke-width="1"/><circle cx="9.3" cy="10.2" r="1.5" fill="#fff" stroke="#1a1aa8" stroke-width="1.1"/><circle cx="9.3" cy="16.6" r="1.5" fill="#fff" stroke="#1a1aa8" stroke-width="1.1"/><circle cx="9.3" cy="22.8" r="1.5" fill="#fff" stroke="#1a1aa8" stroke-width="1.1"/><circle cx="15.6" cy="10.2" r="1.5" fill="#fff" stroke="#1a1aa8" stroke-width="1.1"/><circle cx="15.6" cy="16.6" r="1.5" fill="#fff" stroke="#1a1aa8" stroke-width="1.1"/><circle cx="15.6" cy="22.8" r="1.5" fill="#fff" stroke="#1a1aa8" stroke-width="1.1"/><circle cx="21.8" cy="10.2" r="1.5" fill="#fff" stroke="#1a1aa8" stroke-width="1.1"/><circle cx="21.8" cy="16.6" r="1.5" fill="#fff" stroke="#1a1aa8" stroke-width="1.1"/><circle cx="21.8" cy="22.8" r="1.5" fill="#fff" stroke="#1a1aa8" stroke-width="1.1"/></svg>
<svg class="r" style="left:1093px;top:289px" width="24" height="24" viewBox="0 0 24 24"><defs><linearGradient id="gdoc" x1="0" y1="0" x2="1" y2="1"><stop offset="0" stop-color="#c8d4ff"/><stop offset="1" stop-color="#eef2ff"/></linearGradient><radialGradient id="gsph" cx="0.35" cy="0.35" r="0.7"><stop offset="0" stop-color="#f0f4ff"/><stop offset="0.45" stop-color="#4a5ee8"/><stop offset="1" stop-color="#101a80"/></radialGradient><linearGradient id="gsurf" x1="0" y1="0" x2="1" y2="1"><stop offset="0" stop-color="#a8b8f0"/><stop offset="1" stop-color="#e8eeff"/></linearGradient></defs><path d="M0.5 5L4 1.5H21.5L18 5Z" fill="#c8d4ff" stroke="#6a7ad8"/><path d="M18 5L21.5 1.5V8.5L18 12Z" fill="#98a8e8" stroke="#6a7ad8"/><rect x="0.5" y="5" width="17.5" height="7" fill="#e8eeff" stroke="#6a7ad8"/><path d="M0.5 8.5H18M6.3 5V12M12.1 5V12" stroke="#6a7ad8"/><rect x="10" y="9.2" width="12.6" height="14.4" fill="url(#gdoc)" stroke="#7a88d8" stroke-width="1.2"/><path d="M14 13h7M14 17h7M14 21h7" stroke="#b8c0e0" stroke-width="1.2"/><path d="M11.5 13h2M11.5 17h2M11.5 21h2" stroke="#e8e000" stroke-width="1.6"/></svg>
<svg class="r" style="left:1093px;top:325px" width="24" height="24" viewBox="0 0 24 24"><path d="M3.4 5.4V19" stroke="#222" stroke-width="1"/><path d="M10.4 5.4V19" stroke="#222" stroke-width="1"/><path d="M17.3 5.4V19" stroke="#222" stroke-width="1"/><path d="M3.4 5.4H17.3" stroke="#222" stroke-width="1"/><path d="M3.4 12.1H17.3" stroke="#222" stroke-width="1"/><path d="M3.4 19H17.3" stroke="#222" stroke-width="1"/><rect x="1.7999999999999998" y="3.8000000000000003" width="3.2" height="3.2" fill="#fff" stroke="#1a1aa8" stroke-width="1.1"/><rect x="1.7999999999999998" y="10.5" width="3.2" height="3.2" fill="#fff" stroke="#1a1aa8" stroke-width="1.1"/><rect x="1.7999999999999998" y="17.4" width="3.2" height="3.2" fill="#fff" stroke="#1a1aa8" stroke-width="1.1"/><rect x="8.8" y="3.8000000000000003" width="3.2" height="3.2" fill="#fff" stroke="#1a1aa8" stroke-width="1.1"/><rect x="8.8" y="10.5" width="3.2" height="3.2" fill="#fff" stroke="#1a1aa8" stroke-width="1.1"/><rect x="8.8" y="17.4" width="3.2" height="3.2" fill="#fff" stroke="#1a1aa8" stroke-width="1.1"/><rect x="15.700000000000001" y="3.8000000000000003" width="3.2" height="3.2" fill="#fff" stroke="#1a1aa8" stroke-width="1.1"/><rect x="15.700000000000001" y="10.5" width="3.2" height="3.2" fill="#fff" stroke="#1a1aa8" stroke-width="1.1"/><rect x="15.700000000000001" y="17.4" width="3.2" height="3.2" fill="#fff" stroke="#1a1aa8" stroke-width="1.1"/><path d="M20.5 17V23" stroke="#d89030" stroke-width="3.5" stroke-linecap="round"/><path d="M20.5 17V11" stroke="#999" stroke-width="3"/><path d="M18 8.5C18 6 23 6 23 8.5C23 11 18 11 18 8.5Z" fill="none" stroke="#999" stroke-width="2"/></svg>
<svg class="r" style="left:1093px;top:362px" width="24" height="24" viewBox="0 0 24 24"><defs><linearGradient id="gdoc" x1="0" y1="0" x2="1" y2="1"><stop offset="0" stop-color="#c8d4ff"/><stop offset="1" stop-color="#eef2ff"/></linearGradient><radialGradient id="gsph" cx="0.35" cy="0.35" r="0.7"><stop offset="0" stop-color="#f0f4ff"/><stop offset="0.45" stop-color="#4a5ee8"/><stop offset="1" stop-color="#101a80"/></radialGradient><linearGradient id="gsurf" x1="0" y1="0" x2="1" y2="1"><stop offset="0" stop-color="#a8b8f0"/><stop offset="1" stop-color="#e8eeff"/></linearGradient></defs><g transform="translate(0,0)"><path d="M4 4C6 1 9 3 11 1.5C12.5 0.5 13.5 1 13 2" stroke="#222" stroke-width="1.1" fill="none"/><rect x="1.5" y="4.5" width="13" height="11" rx="1" fill="#fff" stroke="#222" stroke-width="1.2"/><rect x="1.5" y="4.5" width="13" height="2.5" fill="#fff" stroke="#222" stroke-width="0.8" stroke-dasharray="1 1"/><rect x="1.5" y="14" width="13" height="2" fill="#222"/><circle cx="2.5" cy="5" r="1.5" fill="#f0f000"/><path d="M3 8.5l1.5 1.5l1.5-1.5M3 11.5l1.5-1.5l1.5 1.5" stroke="#f00010" stroke-width="1.1" fill="none"/><path d="M7.5 8.5l1.5 1.5l1.5-1.5M7.5 11.5l1.5-1.5l1.5 1.5" stroke="#0010f0" stroke-width="1.1" fill="none"/><rect x="11" y="8.5" width="11.5" height="15" fill="url(#gdoc)" stroke="#7a88d8" stroke-width="1.2"/><path d="M15 12h6M15 16h6M15 20h6" stroke="#b8c0e0" stroke-width="1.2"/><path d="M12.5 12h2M12.5 16h2M12.5 20h2" stroke="#e8e000" stroke-width="1.6"/></g></svg>
<div class="r" style="left:1089px;top:405px;width:33px;height:34px;background:#d7d7d6;border:1px solid #c2c2c1;border-radius:4px;box-sizing:border-box"></div>
<svg class="r" style="left:1093px;top:410px" width="24" height="24" viewBox="0 0 24 24"><g fill="#0a4f88" stroke="#021830" stroke-width="0.8"><path d="M1 3.5H4.5L6.3 9L8 3.5H11.5V21.5H8.5V10L7 15H5.5L4 10V21.5H1Z"/><path d="M13 3.5H23V7H16.5V10.5H23V21.5H13V18H19.5V14H13Z"/></g></svg>
<svg class="r" style="left:1093px;top:445px" width="24" height="24" viewBox="0 0 24 24"><defs><linearGradient id="gdoc" x1="0" y1="0" x2="1" y2="1"><stop offset="0" stop-color="#c8d4ff"/><stop offset="1" stop-color="#eef2ff"/></linearGradient><radialGradient id="gsph" cx="0.35" cy="0.35" r="0.7"><stop offset="0" stop-color="#f0f4ff"/><stop offset="0.45" stop-color="#4a5ee8"/><stop offset="1" stop-color="#101a80"/></radialGradient><linearGradient id="gsurf" x1="0" y1="0" x2="1" y2="1"><stop offset="0" stop-color="#a8b8f0"/><stop offset="1" stop-color="#e8eeff"/></linearGradient></defs><path d="M11 4L15 0.5H22L18 4Z" fill="#b8c4ff" stroke="#7080d8" stroke-width="0.8"/><path d="M18 4L22 0.5V8L18 12Z" fill="#8898e8" stroke="#7080d8" stroke-width="0.8"/><rect x="11" y="4" width="7" height="8" fill="#d0daff" stroke="#7080d8" stroke-width="0.8"/><path d="M3 5C1 10 2 16 6 19C10 22 14 20 15 16" stroke="#4a90d0" stroke-width="2.2" fill="none"/><path d="M6 19C8 22 13 22 15 17" stroke="#555" stroke-width="2.2" fill="none"/><circle cx="3" cy="4.5" r="1.5" fill="#333"/><circle cx="8.5" cy="4" r="1.5" fill="#333"/><circle cx="17" cy="14" r="3.2" fill="#3a88d8" stroke="#1a4a90"/></svg>
<svg class="r" style="left:1093px;top:482px" width="24" height="24" viewBox="0 0 24 24"><rect x="1" y="1" width="14" height="11" fill="#2070d0" stroke="#666" stroke-width="1.1"/><path d="M4 3V8M6 3V8" stroke="#ffee00" stroke-width="1.5"/><path d="M2 14H13V16H2Z" fill="#ddd" stroke="#888" stroke-width="0.8"/><path d="M8 24C8 17 23 17 23 24Z" fill="#f4f6ff" stroke="#888"/><path d="M15.5 18.5V24" stroke="#2040c0" stroke-width="2"/><circle cx="15.5" cy="12" r="5.5" fill="#e8a848" stroke="#905010" stroke-width="0.9"/><path d="M10.5 10.5C13 8.5 18 8.5 20.5 10.5" stroke="#804010" stroke-width="1.2" fill="none"/></svg>
<div class="r" style="left:1092px;top:241px;width:26px;height:1px;background:#d2d2d1"></div>
<div class="r" style="left:1092px;top:397px;width:26px;height:1px;background:#d2d2d1"></div>
<div class="r" style="left:321px;top:792px;width:24px;height:23px;"></div>
<svg class="r" style="left:321px;top:792px" width="24" height="23" viewBox="0 0 24 23"><path d="M3 14L13 10L23 16L13 21Z" fill="#2060f0"/><ellipse cx="13" cy="15.5" rx="7" ry="3.5" fill="#40e040"/><ellipse cx="13" cy="15.5" rx="4.5" ry="2.2" fill="#f0e020"/><ellipse cx="13" cy="15.5" rx="2.5" ry="1.3" fill="#f02020"/><rect x="1" y="2" width="10" height="9" fill="#f4f4f4" stroke="#555" stroke-width="1.2"/><path d="M3 5L6 9L12 1" stroke="#10b010" stroke-width="2" fill="none"/></svg>
<div class="r" style="left:356px;top:793px;width:1px;height:20px;background:#d4d4d3"></div>
<svg class="r" style="left:371px;top:793px" width="22" height="22" viewBox="0 0 22 22"><g fill="none" stroke="#111" stroke-width="1.2"><polygon points="1,6 11,1 21,6 21,16 11,21 1,16"/><path d="M1 6L11 11L21 6M11 11V21"/><path d="M6 3.5L16 8.5M16 3.5L6 8.5M6 8.5V18.5M16 8.5V18.5M1 11L11 16L21 11"/></g></svg>
<div class="r" style="left:400px;top:787px;width:34px;height:34px;background:#d7d7d6;border:1px solid #c6c6c5;border-radius:4px;box-sizing:border-box"></div>
<svg class="r" style="left:406px;top:793px" width="22" height="22" viewBox="0 0 22 22"><polygon points="11,1 21,6 11,11 1,6" fill="#e8eeff"/><polygon points="1,6 11,11 11,21 1,16" fill="#c8d4f0"/><polygon points="11,11 21,6 21,16 11,21" fill="#6878b0"/><g fill="none" stroke="#111" stroke-width="1.2"><polygon points="1,6 11,1 21,6 21,16 11,21 1,16"/><path d="M1 6L11 11L21 6M11 11V21"/></g></svg>
<svg class="r" style="left:443px;top:793px" width="22" height="22" viewBox="0 0 22 22"><polygon points="11,1 21,6 11,11 1,6" fill="#c8d0e8"/><polygon points="1,6 11,11 11,21 1,16" fill="#b8c4e0"/><polygon points="11,11 21,6 21,16 11,21" fill="#a8b4d8"/><g fill="none" stroke="#111" stroke-width="1.2"><polygon points="1,6 11,1 21,6 21,16 11,21 1,16"/><path d="M1 6L11 11L21 6M11 11V21"/></g></svg>
<svg class="r" style="left:479px;top:793px" width="22" height="22" viewBox="0 0 22 22"><g fill="none" stroke="#222" stroke-width="1.2"><polygon points="1,6 11,1 21,6 21,16 11,21 1,16"/><path d="M1 6L11 11L21 6M11 11V21"/><path d="M6 3.5L16 8.5M16 3.5L6 8.5M6 8.5V18.5M16 8.5V18.5M1 11L11 16L21 11"/></g></svg>
<svg class="r" style="left:515px;top:793px" width="22" height="22" viewBox="0 0 22 22"><g fill="none" stroke="#111" stroke-width="1.2"><polygon points="1,6 11,1 21,6 21,16 11,21 1,16"/><path d="M1 6L11 11L21 6M11 11V21"/></g></svg>
<svg class="r" style="left:551px;top:793px" width="22" height="22" viewBox="0 0 22 22"><g fill="none" stroke="#111" stroke-width="1.2"><polygon points="1,6 11,1 21,6 21,16 11,21 1,16"/><path d="M1 6L11 11L21 6M11 11V21"/></g></svg>
<svg class="r" style="left:588px;top:793px" width="22" height="22" viewBox="0 0 22 22"><g stroke="#222" stroke-width="1"><path d="M9.8 2.5H12.2M11 1.3V3.7"/><path d="M4.8 4.5H7.2M6 3.3V5.7"/><path d="M14.8 4.5H17.2M16 3.3V5.7"/><path d="M9.8 7H12.2M11 5.8V8.2"/><path d="M0.19999999999999996 8H2.8"/><path d="M19.7 8H22.3"/><path d="M3.7 11H6.3"/><path d="M15.7 11H18.3"/><path d="M9.7 12H12.3"/><path d="M0.19999999999999996 13H2.8"/><path d="M19.7 13H22.3"/><path d="M4.7 15H7.3"/><path d="M14.7 15H17.3"/><path d="M9.7 16.5H12.3"/><path d="M1.7 17H4.3"/><path d="M17.7 17H20.3"/><path d="M5.7 19.5H8.3"/><path d="M13.7 19.5H16.3"/><path d="M9.5 21.5L11 19.5L12.5 21.5Z" fill="#222"/></g></svg>
<div class="r" style="left:616px;top:787px;width:34px;height:34px;background:#d7d7d6;border:1px solid #c6c6c5;border-radius:4px;box-sizing:border-box"></div>
<svg class="r" style="left:623px;top:793px" width="22" height="22" viewBox="0 0 22 22"><polygon points="11,1 21,6 11,11 1,6" fill="#a8b8e0"/><polygon points="1,6 11,11 11,21 1,16" fill="#8090c8"/><polygon points="11,11 21,6 21,16 11,21" fill="#5868a0"/><g fill="none" stroke="#111" stroke-width="1.2"><polygon points="1,6 11,1 21,6 21,16 11,21 1,16"/><path d="M1 6L11 11L21 6M11 11V21"/><path d="M6 3.5L16 8.5M16 3.5L6 8.5M6 8.5V18.5M16 8.5V18.5M1 11L11 16L21 11"/></g></svg>
<svg class="r" style="left:659px;top:793px" width="22" height="22" viewBox="0 0 22 22"><polygon points="11,1 21,6 11,11 1,6" fill="#b8c4e8"/><polygon points="1,6 11,11 11,21 1,16" fill="#98a8d8"/><polygon points="11,11 21,6 21,16 11,21" fill="#7080b8"/><g fill="none" stroke="#111" stroke-width="1.2"><polygon points="1,6 11,1 21,6 21,16 11,21 1,16"/><path d="M1 6L11 11L21 6M11 11V21"/><path d="M6 3.5L16 8.5M16 3.5L6 8.5M6 8.5V18.5M16 8.5V18.5M1 11L11 16L21 11"/></g></svg>
<svg class="r" style="left:694px;top:792px" width="23" height="25" viewBox="0 0 23 25"><polygon points="0.5,4.5 5,0.5 22.5,0.5 22.5,20.5 18,24.5 0.5,24.5" fill="#eef0fb" stroke="#c8ccf0" stroke-width="0.8"/><path d="M0.5 4.5V24.5M22.5 0.5V20.5M18 24.5L22.5 20.5M0.5 4.5L5 0.5" stroke="#4a5af0" stroke-width="1.2"/><g fill="#d8dce8" stroke="#9aa0b8" stroke-width="0.8"><polygon points="3,8 9,5 15,8 15,17 9,20 3,17"/></g><g fill="#8a98b8" stroke="#222" stroke-width="1.1"><polygon points="8,9 14.5,5.5 21,9 21,18.5 14.5,22 8,18.5"/></g><path d="M8 9L14.5 12.5L21 9M14.5 12.5V22M11.2 7.2L17.7 10.7M17.8 7.2L11.2 10.7M11.2 10.7V20.2M17.8 10.7V20.2M8 13.7L14.5 17.2L21 13.7" stroke="#222" stroke-width="1" fill="none"/></svg>
<svg class="r" style="left:729px;top:793px" width="24" height="21" viewBox="0 0 24 21"><defs><radialGradient id="gfr" cx="0.52" cy="0.45" r="0.55"><stop offset="0" stop-color="#ff0000"/><stop offset="0.2" stop-color="#ff2000"/><stop offset="0.38" stop-color="#f0f000"/><stop offset="0.6" stop-color="#30e030"/><stop offset="0.8" stop-color="#10c0f0"/><stop offset="1" stop-color="#1040f0"/></radialGradient></defs><polygon points="0.5,10.5 14,0.5 23.5,8 10,20" fill="url(#gfr)"/></svg>
<svg class="r" style="left:767px;top:800px" width="12" height="7" viewBox="0 0 12 7"><path d="M0 0H11L5.5 6.5Z" fill="#111"/></svg>
<div class="t" style="left:793px;top:794px;font-size:16px;line-height:16px;color:#111;font-family:'Liberation Sans';transform:scaleX(1.0135)">U</div>
<svg class="r" style="left:806px;top:804px" width="8" height="8" viewBox="0 0 8 8"><circle cx="4" cy="4" r="2" fill="none" stroke="#3040c0"/><path d="M4 0V8M0 4H8M1 1L7 7M7 1L1 7" stroke="#3040c0" stroke-width="0.8"/></svg>
<div class="r" style="left:828px;top:793px;width:1px;height:20px;background:#d4d4d3"></div>
<div class="r" style="left:836px;top:787px;width:34px;height:34px;background:#d7d7d6;border:1px solid #c6c6c5;border-radius:4px;box-sizing:border-box"></div>
<svg class="r" style="left:841px;top:792px" width="24" height="24" viewBox="0 0 24 24"><polygon points="2,7 11,2 22,6 22,17 13,22 2,17" fill="#3a70f0"/><polygon points="2,7 11,2 22,6 13,10" fill="#b8d0ff"/><polygon points="13,10 22,6 22,17 13,22" fill="#1a40d0"/><g fill="none" stroke="#1020a0" stroke-width="1.5"><polygon points="2,7 11,2 22,6 22,17 13,22 2,17"/><path d="M2 7L13 10L22 6M13 10V22"/></g></svg>
<svg class="r" style="left:877px;top:792px" width="24" height="24" viewBox="0 0 24 24"><polygon points="1,8 11,3 23,7 23,18 12,23 1,18" fill="#3a70f0"/><polygon points="1,8 11,3 23,7 12,11" fill="#d0e0ff"/><polygon points="12,11 23,7 23,18 12,23" fill="#101830"/></svg>
<svg class="r" style="left:913px;top:792px" width="24" height="24" viewBox="0 0 24 24"><g fill="none" stroke="#1a2ad0" stroke-width="1.3"><polygon points="1,8 11,2 23,7 23,17 13,23 1,18"/><path d="M1 8L13 13L23 7M13 13V23M11 2V12L1 18M11 12L23 17"/></g></svg>
<div class="r" style="left:948px;top:793px;width:1px;height:20px;background:#d4d4d3"></div>
<div class="t" style="left:961px;top:793px;font-size:11px;line-height:11px;color:#a2a2a1;font-family:'Liberation Sans';transform:scaleX(1.1204)">Shft</div>
<div class="t" style="left:966px;top:806px;font-size:11px;line-height:11px;color:#a2a2a1;font-family:'Liberation Sans';transform:scaleX(1.1453)">Ctrl</div>
<svg class="r" style="left:999px;top:792px" width="8" height="7" viewBox="0 0 8 7"><path d="M0 0L3.5 3.5L0 7ZM4 0L7.5 3.5L4 7Z" fill="#333"/></svg>
<div class="r" style="left:312px;top:827px;width:362px;height:23px;background:#fff;border:1px solid #bdbdbc;border-radius:3px;box-sizing:border-box"></div>
<div class="t" style="left:322px;top:832px;font-size:13px;line-height:13px;color:#111;font-family:'Liberation Sans';transform:scaleX(1.2047)">&gt;</div>
<div class="r" style="left:675px;top:826px;width:351px;height:25px;background:#fff;overflow:hidden"></div>
<div class="r" style="left:675px;top:826px;width:351px;height:25px;overflow:hidden">
<div class="t" style="left:1px;top:-4px;font-size:13px;line-height:13px;color:#2e3436;font-family:'Liberation Sans';transform:scaleX(1.0808)">Documents/LSTC/LS-PrePost4.5/lsppconf</div>
<div class="t" style="left:1px;top:10px;font-size:13px;line-height:13px;color:#2e3436;font-family:'Liberation Sans';transform:scaleX(1.1648)">timestamp 0</div>
</div>
<div class="r" style="left:1026px;top:826px;width:13px;height:25px;background:#c6c7c6"></div>
<div class="r" style="left:1029px;top:830px;width:6px;height:17px;background:#7c7d7c;border-radius:3px"></div>
<div class="r" style="left:310px;top:851px;width:818px;height:1px;background:#b4b4b3"></div>
<div class="t" style="left:1013px;top:856px;font-size:13px;line-height:13px;color:#42474a;font-family:'Liberation Sans';transform:scaleX(1.1031)">Normal Rend...</div>
<div class="r" style="left:452px;top:617px;width:457px;height:138px;box-shadow:0 5px 12px rgba(0,0,0,0.42);border-radius:5px"></div>
<div class="r" style="left:452px;top:617px;width:457px;height:138px;background:#e9e9e8;border:1px solid #8f8f8e;border-radius:5px 5px 3px 3px;box-sizing:border-box"></div>
<div class="r" style="left:453px;top:618px;width:455px;height:26px;background:linear-gradient(#f0f0ef,#e8e8e7);border-radius:4px 4px 0 0"></div>
<div class="r" style="left:834px;top:618px;width:74px;height:26px;background:linear-gradient(#dadad9,#c4c4c3);border-radius:0 4px 0 10px"></div>
<svg class="r" style="left:460px;top:622px" width="16" height="19" viewBox="0 0 16 19"><defs><linearGradient id="lg2" x1="0" y1="0" x2="0" y2="1"><stop offset="0" stop-color="#d6d6d6"/><stop offset="1" stop-color="#9c9c9c"/></linearGradient></defs><rect x="0" y="0" width="16" height="19" fill="url(#lg2)"/><rect x="0" y="17.5" width="16" height="1.5" fill="#333"/><text x="8" y="8.5" font-family="Liberation Sans" font-size="8.5" font-weight="bold" text-anchor="middle" fill="#222">LS</text><text x="8" y="16.5" font-family="Liberation Sans" font-size="8.5" font-weight="bold" text-anchor="middle" fill="#222">PP</text></svg>
<div class="t" style="left:629px;top:625px;font-size:13px;line-height:13px;color:#2e3436;font-weight:bold;font-family:'Liberation Sans';transform:scaleX(1.1913)">Animate</div>
<svg class="r" style="left:838px;top:623px" width="66" height="18" viewBox="0 0 66 18"><g fill="none" stroke="#fff" stroke-width="2"><path d="M11 15V5M7 9L11 5L15 9"/><rect x="29" y="5" width="9" height="9"/><path d="M50 4l9 9M59 4l-9 9"/></g><g fill="none" stroke="#8a8a89" stroke-width="1.2"><rect x="31" y="7" width="5" height="5"/></g></svg>
<div class="r" style="left:459px;top:656px;width:16px;height:16px;border:1px solid #85858a;border-radius:2px;background:linear-gradient(#fafafa,#e6e6e6);box-sizing:border-box"></div>
<div class="t" style="left:481px;top:657px;font-size:13px;line-height:13px;color:#42474a;font-family:'Liberation Sans';transform:scaleX(1.0974)">Eigen First:</div>
<div class="r" style="left:554px;top:650px;width:38px;height:29px;background:#ffffff;border:1px solid #c8c8c7;border-radius:3px;box-sizing:border-box"></div>
<div class="t" style="left:569.0859375px;top:658px;font-size:13px;line-height:13px;color:#111;font-family:'Liberation Mono';transform:scaleX(1.0040)">1</div>
<div class="t" style="left:595px;top:657px;font-size:13px;line-height:13px;color:#42474a;font-family:'Liberation Sans';transform:scaleX(1.1159)">Last:</div>
<div class="r" style="left:630px;top:650px;width:38px;height:29px;background:#ffffff;border:1px solid #c8c8c7;border-radius:3px;box-sizing:border-box"></div>
<div class="t" style="left:641.171875px;top:658px;font-size:13px;line-height:13px;color:#111;font-family:'Liberation Mono';transform:scaleX(1.0040)">11</div>
<div class="t" style="left:671px;top:657px;font-size:13px;line-height:13px;color:#42474a;font-family:'Liberation Sans';transform:scaleX(1.1253)">Inc:</div>
<div class="r" style="left:697px;top:650px;width:28px;height:29px;background:#ffffff;border:1px solid #c8c8c7;border-radius:3px;box-sizing:border-box"></div>
<div class="t" style="left:707.0859375px;top:658px;font-size:13px;line-height:13px;color:#111;font-family:'Liberation Mono';transform:scaleX(1.0040)">1</div>
<div class="t" style="left:727px;top:657px;font-size:13px;line-height:13px;color:#42474a;font-family:'Liberation Sans';transform:scaleX(1.1298)">Time:</div>
<div class="r" style="left:764px;top:650px;width:58px;height:29px;background:#ededec;border:1px solid #c8c8c7;border-radius:3px;box-sizing:border-box"></div>
<div class="t" style="left:802.171875px;top:658px;font-size:13px;line-height:13px;color:#9a9a99;font-family:'Liberation Mono';transform:scaleX(1.0040)">1</div>
<div class="t" style="left:824px;top:657px;font-size:13px;line-height:13px;color:#42474a;font-family:'Liberation Sans';transform:scaleX(1.1417)">State:</div>
<div class="r" style="left:866px;top:650px;width:38px;height:29px;background:#ffffff;border:1px solid #c8c8c7;border-radius:3px;box-sizing:border-box"></div>
<div class="t" style="left:877.171875px;top:658px;font-size:13px;line-height:13px;color:#111;font-family:'Liberation Mono';transform:scaleX(1.0040)">11</div>
<div class="r" style="left:457px;top:683px;width:448px;height:1px;background:#d4d4d3"></div>
<div class="r" style="left:471px;top:694px;width:16px;height:16px;border:1px solid #85858a;border-radius:2px;background:linear-gradient(#fafafa,#e6e6e6);box-sizing:border-box"></div>
<div class="t" style="left:493px;top:696px;font-size:13px;line-height:13px;color:#42474a;font-family:'Liberation Sans';transform:scaleX(1.1415)">Animate</div>
<div class="r" style="left:597px;top:687px;width:30px;height:30px;background:linear-gradient(#efefee,#d8d8d7);border:1px solid #b0b0af;border-radius:3px;box-sizing:border-box"></div>
<div class="r" style="left:629px;top:687px;width:30px;height:30px;background:linear-gradient(#efefee,#d8d8d7);border:1px solid #b0b0af;border-radius:3px;box-sizing:border-box"></div>
<div class="r" style="left:661px;top:687px;width:30px;height:30px;background:linear-gradient(#efefee,#d8d8d7);border:1px solid #b0b0af;border-radius:3px;box-sizing:border-box"></div>
<div class="r" style="left:693px;top:687px;width:30px;height:30px;background:linear-gradient(#efefee,#d8d8d7);border:1px solid #b0b0af;border-radius:3px;box-sizing:border-box"></div>
<div class="r" style="left:725px;top:687px;width:30px;height:30px;background:linear-gradient(#efefee,#d8d8d7);border:1px solid #b0b0af;border-radius:3px;box-sizing:border-box"></div>
<div class="r" style="left:757px;top:687px;width:30px;height:30px;background:linear-gradient(#efefee,#d8d8d7);border:1px solid #b0b0af;border-radius:3px;box-sizing:border-box"></div>
<svg class="r" style="left:600px;top:694px" width="24" height="16" viewBox="0 0 24 16"><g fill="#141452"><path d="M6 8L21 0V16Z"/></g></svg>
<svg class="r" style="left:632px;top:694px" width="24" height="16" viewBox="0 0 24 16"><g fill="#141452"><path d="M4 8L18 0V16Z"/></g></svg>
<svg class="r" style="left:664px;top:694px" width="24" height="16" viewBox="0 0 24 16"><g fill="#141452"><rect x="4" y="0" width="16" height="16"/></g></svg>
<svg class="r" style="left:696px;top:694px" width="24" height="16" viewBox="0 0 24 16"><g fill="#141452"><path d="M5 0L19 8L5 16Z"/></g></svg>
<svg class="r" style="left:728px;top:694px" width="24" height="16" viewBox="0 0 24 16"><g fill="#141452"><path d="M10 0V16C3 13 3 3 10 0ZM13 0V16C20 13 20 3 13 0Z"/></g></svg>
<svg class="r" style="left:760px;top:694px" width="24" height="16" viewBox="0 0 24 16"><g fill="#141452"><path d="M6 0L20 8L6 16Z"/></g></svg>
<div class="r" style="left:837px;top:694px;width:16px;height:16px;border:1px solid #85858a;border-radius:2px;background:linear-gradient(#fafafa,#e6e6e6);box-sizing:border-box"></div>
<div class="t" style="left:859px;top:696px;font-size:13px;line-height:13px;color:#42474a;font-family:'Liberation Sans';transform:scaleX(1.0772)">Loop</div>
<div class="r" style="left:457px;top:719px;width:448px;height:1px;background:#d4d4d3"></div>
<div class="t" style="left:475px;top:731px;font-size:13px;line-height:13px;color:#42474a;font-family:'Liberation Sans';transform:scaleX(1.0709)">17S</div>
<div class="r" style="left:514px;top:735px;width:53px;height:4px;background:#c8c8c7;border-radius:2px"></div>
<div class="r" style="left:514px;top:735px;width:29px;height:4px;background:#3878c8;border-radius:2px"></div>
<div class="t" style="left:578px;top:731px;font-size:13px;line-height:13px;color:#42474a;font-family:'Liberation Sans';transform:scaleX(0.9429)">F</div>
<div class="r" style="left:597px;top:735px;width:274px;height:4px;background:#3878c8;border:0.5px solid #2a5a9a;border-radius:2px"></div>
<div class="r" style="left:533px;top:727px;width:20px;height:20px;background:linear-gradient(#fbfbfb,#e4e4e4);border:1px solid #a8a8a7;border-radius:50%;box-sizing:border-box"></div>
<div class="r" style="left:861px;top:727px;width:20px;height:20px;background:linear-gradient(#fbfbfb,#e4e4e4);border:1px solid #a8a8a7;border-radius:50%;box-sizing:border-box"></div>
</body></html>
